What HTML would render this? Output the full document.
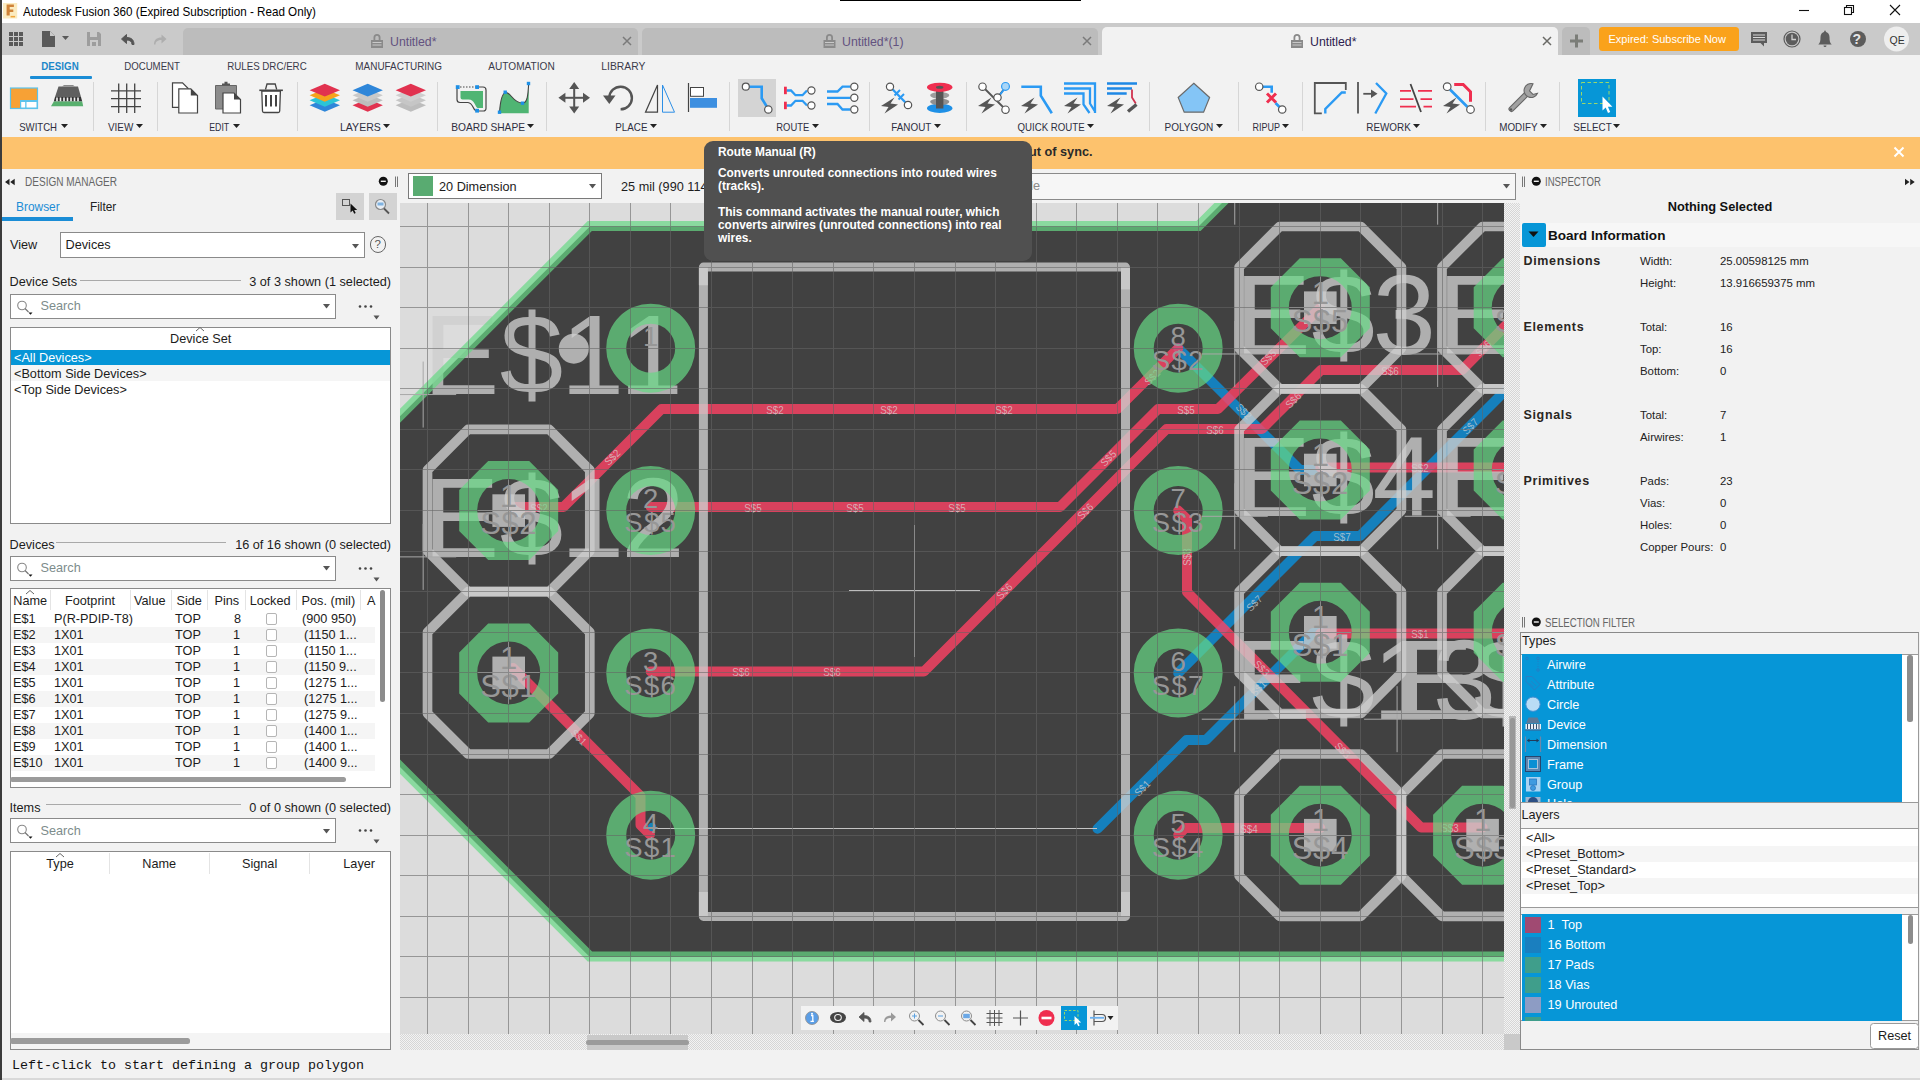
<!DOCTYPE html>
<html lang="en"><head><meta charset="utf-8"><title>Autodesk Fusion 360</title>
<style>
*{box-sizing:border-box}
html,body{margin:0;padding:0}
body{width:1920px;height:1080px;overflow:hidden;position:relative;background:#f2f2f2;font-family:"Liberation Sans",sans-serif;font-size:13px;color:#1a1a1a}
.abs{position:absolute}
.t{position:absolute;white-space:nowrap;line-height:1}
#titlebar{left:0;top:0;width:1920px;height:23px;background:#fff}
#tabbar{left:0;top:23px;width:1920px;height:32px;background:#cacaca}
#toolbar{left:0;top:55px;width:1920px;height:82px;background:#f2f2f2}
#notice{left:0;top:137px;width:1920px;height:32px;background:#fdc26d}
#leftedge{left:0;top:0;width:2px;height:1080px;background:#3c3c3c}
.tab{position:absolute;top:28px;height:27px;background:#bcbcbc;border-radius:5px 5px 0 0}
.tab.act{background:#f2f2f2}
.tabt{position:absolute;top:7px;font-size:12.3px;color:#5a4a78;white-space:nowrap;line-height:1}
.rt{position:absolute;top:61px;font-size:11.5px;color:#3a3a4a;white-space:nowrap;line-height:1;letter-spacing:.1px}
.gl{position:absolute;top:121px;font-size:11.5px;color:#33334a;white-space:nowrap;line-height:1}
.sep{position:absolute;top:82px;width:1px;height:49px;background:#d6d6d6}
.tah{font-family:"Liberation Sans",sans-serif;font-size:12.7px;color:#1c1c1c}
.inp{position:absolute;background:#fff;border:1px solid #8a8a8a}
.box{position:absolute;background:#fff;border:1px solid #8a8a8a}
.hdr{position:absolute;font-size:12px;color:#666;white-space:nowrap;line-height:1}
.row{position:absolute;left:0;white-space:nowrap;line-height:1}
.alt{position:absolute;background:#f5f5f5}
.sel{background:#0696d7;color:#fff}
.lbl{position:absolute;font-weight:bold;font-size:12.5px;color:#2a2622;white-space:nowrap;line-height:1;letter-spacing:.65px}
.k{position:absolute;font-size:11.4px;color:#222;white-space:nowrap;line-height:1}
</style></head><body>
<div id="titlebar" class="abs"></div>
<div class="abs" style="left:840px;top:0;width:241px;height:1px;background:#000"></div>
<div id="tabbar" class="abs"></div>
<div id="toolbar" class="abs"></div>
<div id="notice" class="abs"></div>
<!-- title -->
<svg class="abs" style="left:3px;top:3px" width="15" height="16" viewBox="0 0 15 16"><rect x="0" y="0" width="14.2" height="15.5" fill="#fbebc0"/><path d="M3.600 1.400h7.300v2.700H6.700v2.300h3.600v2.500H6.700v3.500H3.600z" fill="#cf8238"/><rect x="7.600" y="12.900" width="4.500" height="1.500" fill="#f0a63c"/></svg>
<div class="t" style="left:23px;top:6px;font-size:12.6px;color:#000;transform:scaleX(.926);transform-origin:0 0">Autodesk Fusion 360 (Expired Subscription - Read Only)</div>
<svg class="abs" style="left:1790px;top:0" width="130" height="23" viewBox="1790 0 130 23" fill="none" stroke="#111" stroke-width="1.1"><path d="M1799 10.5h10"/><rect x="1844.5" y="7.5" width="7" height="7"/><path d="M1846.500 7.500v-2h7v7h-2"/><path d="M1890 5l10 10M1900 5l-10 10"/></svg>
<!-- quick access -->
<svg class="abs" style="left:0;top:23px" width="200" height="32" viewBox="0 23 200 32">
<g fill="#5a5a5a"><rect x="9" y="32" width="4" height="4"/><rect x="14" y="32" width="4" height="4"/><rect x="19" y="32" width="4" height="4"/><rect x="9" y="37" width="4" height="4"/><rect x="14" y="37" width="4" height="4"/><rect x="19" y="37" width="4" height="4"/><rect x="9" y="42" width="4" height="4"/><rect x="14" y="42" width="4" height="4"/><rect x="19" y="42" width="4" height="4"/>
<path d="M42 31h8l5 5v11H42z"/><path d="M62 36h7l-3.500 4z"/></g>
<path d="M50 31v5h5z" fill="#cacaca"/>
<g fill="#9d9d9d"><path d="M87 32h12l2 2v12H87z"/></g><rect x="90" y="32" width="7" height="5" fill="#cacaca"/><rect x="90" y="40" width="8" height="6" fill="#cacaca"/><rect x="92" y="42" width="4" height="4" fill="#9d9d9d"/>
<path d="M121.500 39l5-4.500v3c5 0 7.500 2.500 7.500 7h-2c0-3-2-4.500-5.500-4.500v3.500z" fill="#555" stroke="#555" stroke-width="1" stroke-linejoin="round"/>
<path d="M166.500 39l-5-4.500v3c-5 0-7.500 2.500-7.500 7h1.500c0-3 2.500-4.500 6-4.500v3.500z" fill="#aeaeae"/>
</svg>
<!-- tabs -->
<div class="tab" style="left:183px;width:455px"></div>
<div class="tab" style="left:642px;width:456px"></div>
<div class="tab act" style="left:1101.500px;width:456.500px;top:27px;height:28px"></div>
<div class="tab" style="left:1562px;width:28px;border-radius:5px 5px 0 0;top:27px;height:28px"></div>
<div class="tabt" style="left:390px;top:35.5px;color:#63527f">Untitled*</div>
<div class="tabt" style="left:842px;top:35.5px;color:#63527f">Untitled*(1)</div>
<div class="tabt" style="left:1310px;top:35.5px;color:#2d1d4f">Untitled*</div>
<svg class="abs" style="left:0;top:23px" width="1920" height="32" viewBox="0 23 1920 32">
<g id="lock" fill="#8a8a8a"><path d="M371 40h12v8h-12zM373.500 40v-2.500a3.500 3.500 0 0 1 7 0V40h-1.800v-2.500a1.700 1.700 0 0 0 -3.400 0V40z"/><path d="M372.500 42.500h9M372.500 45h9" stroke="#c9c9c9" stroke-width="1"/></g>
<use href="#lock" x="452.500"/><use href="#lock" x="920"/>
<g stroke="#7a7a7a" stroke-width="1.500" fill="none"><path d="M623 37l8 8M631 37l-8 8"/><path d="M1083 37l8 8M1091 37l-8 8"/></g>
<path d="M1543 37l8 8M1551 37l-8 8" stroke="#6a6a66" stroke-width="1.500" fill="none"/>
<path d="M1570 41h13M1576.500 34.500v13" stroke="#7b7d78" stroke-width="3"/>
<rect x="1599" y="27" width="140" height="24" rx="3.500" fill="#faa21b"/>
<g fill="#5c5c5c"><path d="M1751 32h16v11h-3v3.500l-3.500-3.500h-9.500z"/><circle cx="1792" cy="39" r="8" fill="none" stroke="#5c5c5c" stroke-width="1.200"/><circle cx="1792" cy="39" r="6.300"/><path d="M1818.300 44.500c1.700-1.500 2.200-3.500 2.200-7.500a4.500 5.200 0 0 1 9 0c0 4 0.500 6 2.200 7.500zM1823.500 45.500h3a1.500 1.500 0 0 1 -3 0z"/><rect x="1824.200" y="30.700" width="1.600" height="2"/><circle cx="1858" cy="39" r="8"/></g>
<path d="M1753 35h12M1753 37.500h12M1753 40h12" stroke="#d8d8d8" stroke-width="1"/>
<path d="M1792 34.500v5h4" stroke="#d0d0d0" stroke-width="1.300" fill="none"/>
<circle cx="1896.500" cy="39" r="12.500" fill="#eeeeee"/>
</svg>
<div class="t" style="left:1608.500px;top:33.500px;font-size:11px;color:#fff">Expired: Subscribe Now</div>
<div class="t" style="left:1852.500px;top:32px;font-size:14px;font-weight:bold;color:#e6e6e6">?</div>
<div class="t" style="left:1889.500px;top:34.500px;font-size:10.5px;color:#333">QE</div>
<!-- ribbon tabs -->
<svg class="abs" style="left:0;top:55px" width="1920" height="82" viewBox="0 55 1920 82" font-family="Liberation Sans,sans-serif" font-size="11.2">
<text x="41.3" y="70.2" textLength="37.4" lengthAdjust="spacingAndGlyphs" fill="#1c87c9" font-weight="bold">DESIGN</text>
<text x="124.2" y="70.2" textLength="55.8" lengthAdjust="spacingAndGlyphs" fill="#3a3a4a">DOCUMENT</text>
<text x="227.2" y="70.2" textLength="79.5" lengthAdjust="spacingAndGlyphs" fill="#3a3a4a">RULES DRC/ERC</text>
<text x="355.3" y="70.2" textLength="86.7" lengthAdjust="spacingAndGlyphs" fill="#3a3a4a">MANUFACTURING</text>
<text x="488.3" y="70.2" textLength="66.4" lengthAdjust="spacingAndGlyphs" fill="#3a3a4a">AUTOMATION</text>
<text x="601.3" y="70.2" textLength="44.0" lengthAdjust="spacingAndGlyphs" fill="#3a3a4a">LIBRARY</text>
<text x="19.2" y="131" textLength="37.8" lengthAdjust="spacingAndGlyphs" fill="#2e2e40">SWITCH</text>
<text x="108" y="131" textLength="25.3" lengthAdjust="spacingAndGlyphs" fill="#2e2e40">VIEW</text>
<text x="209.2" y="131" textLength="20.0" lengthAdjust="spacingAndGlyphs" fill="#2e2e40">EDIT</text>
<text x="340" y="131" textLength="40.8" lengthAdjust="spacingAndGlyphs" fill="#2e2e40">LAYERS</text>
<text x="451.3" y="131" textLength="73.7" lengthAdjust="spacingAndGlyphs" fill="#2e2e40">BOARD SHAPE</text>
<text x="615.3" y="131" textLength="32.2" lengthAdjust="spacingAndGlyphs" fill="#2e2e40">PLACE</text>
<text x="776.3" y="131" textLength="32.9" lengthAdjust="spacingAndGlyphs" fill="#2e2e40">ROUTE</text>
<text x="891.3" y="131" textLength="40.0" lengthAdjust="spacingAndGlyphs" fill="#2e2e40">FANOUT</text>
<text x="1017.5" y="131" textLength="67.2" lengthAdjust="spacingAndGlyphs" fill="#2e2e40">QUICK ROUTE</text>
<text x="1164.5" y="131" textLength="48.8" lengthAdjust="spacingAndGlyphs" fill="#2e2e40">POLYGON</text>
<text x="1252.5" y="131" textLength="27.5" lengthAdjust="spacingAndGlyphs" fill="#2e2e40">RIPUP</text>
<text x="1366.3" y="131" textLength="44.5" lengthAdjust="spacingAndGlyphs" fill="#2e2e40">REWORK</text>
<text x="1499.2" y="131" textLength="38.3" lengthAdjust="spacingAndGlyphs" fill="#2e2e40">MODIFY</text>
<text x="1573.3" y="131" textLength="38.4" lengthAdjust="spacingAndGlyphs" fill="#2e2e40">SELECT</text>
</svg>
<div class="abs" style="left:30px;top:76px;width:62px;height:3px;background:#1b8dd6;border-radius:1px"></div>
<svg class="abs" style="left:0;top:118px" width="1920" height="16" viewBox="0 118 1920 16" fill="#222">
<path id="dd" d="M0 0h7l-3.500 4z" transform="translate(61 124)"/>
<use href="#dd" x="75"/><use href="#dd" x="172"/><use href="#dd" x="322"/><use href="#dd" x="466"/><use href="#dd" x="589"/><use href="#dd" x="751"/><use href="#dd" x="873"/><use href="#dd" x="1026"/><use href="#dd" x="1155"/><use href="#dd" x="1221"/><use href="#dd" x="1352"/><use href="#dd" x="1479"/><use href="#dd" x="1552"/>
</svg>
<div class="sep" style="left:93px"></div><div class="sep" style="left:157px"></div><div class="sep" style="left:297px"></div><div class="sep" style="left:437px"></div><div class="sep" style="left:546px"></div><div class="sep" style="left:729px"></div><div class="sep" style="left:869px"></div><div class="sep" style="left:966px"></div><div class="sep" style="left:1149px"></div><div class="sep" style="left:1238px"></div><div class="sep" style="left:1302px"></div><div class="sep" style="left:1485px"></div><div class="sep" style="left:1559px"></div>
<!-- notice -->
<div class="t" style="right:827.5px;top:145.5px;font-size:12.7px;font-weight:bold;color:#2a2a2a">Board and schematic are out of sync.</div>
<svg class="abs" style="left:1892px;top:145px" width="14" height="14" viewBox="0 0 14 14"><path d="M2.500 2.500l9 9M11.500 2.500l-9 9" stroke="#fff" stroke-width="2" fill="none"/></svg>
<svg class="abs" style="left:0;top:76px" width="1920" height="44" viewBox="0 76 1920 44" fill="none">
<defs>
<path id="bolt" d="M13.500 0L0 8.500l7.500 1L3.500 16 17 7l-7.500-1z" fill="#555"/>
<path id="dia" d="M0 6.400L15.200 0l15.200 6.400L15.200 12.800z"/>
</defs>
<!-- switch -->
<rect x="10.500" y="88" width="27" height="20.500" fill="#f7a135" stroke="#5cc3ec" stroke-width="1.200"/>
<rect x="20" y="100" width="17.500" height="8.500" fill="#5cc3ec"/><rect x="21.200" y="102" width="4" height="5.500" fill="#fff"/><rect x="26.500" y="102" width="10" height="5.500" fill="#fff"/>
<path d="M58.500 86.500h19.500l3 10.500H55z" fill="#5f5f5f"/><path d="M62 86.500l2-1.500h9l2 1.500" fill="#8a8a8a"/>
<path d="M55 97h26l1.200 4.500H53.800z" fill="#333"/><path d="M57 97.500v4M60.500 97.500v4M64 97.500v4M67.500 97.500v4M71 97.500v4M74.500 97.500v4M78 97.500v4" stroke="#f4f4f4" stroke-width="1.600"/>
<path d="M53.800 101.500h28.400l1 4.700H51z" fill="#58b06e"/>
<!-- view grid -->
<path d="M118.700 83.500v29.500M126.700 83.500v29.500M134.700 83.500v29.500M111 90.800h30M111 98.700h30M111 106.700h30" stroke="#444" stroke-width="1.300"/>
<!-- copy -->
<path d="M172.500 82.800h10l5.500 5.500v19h-15.500z" fill="#fff" stroke="#444" stroke-width="1.200"/>
<path d="M178.800 88.800h12l6.700 6.700v17.500h-18.700z" fill="#fff" stroke="#444" stroke-width="1.200"/><path d="M190.800 88.800v6.700h6.700z" fill="#444"/>
<!-- paste -->
<path d="M215.500 85.500h21v23.500h-21z" fill="#8c8c8c" stroke="#666" stroke-width="1"/><path d="M222 85.500v-2h2.500v-1.800h3v1.800h2.500v2z" fill="#555"/>
<path d="M223 93h11l6.500 6.500V113H223z" fill="#fff" stroke="#444" stroke-width="1.200"/><path d="M234 93v6.500h6.500z" fill="#444"/>
<!-- trash -->
<path d="M261.800 91h18.600l-0.700 20a1.500 1.500 0 0 1 -1.500 1.500h-14.200a1.500 1.500 0 0 1 -1.500-1.500z" fill="#fff" stroke="#444" stroke-width="1.300"/>
<path d="M259.300 90.300h23.600" stroke="#444" stroke-width="1.600"/><path d="M265.500 89.500l1.500-5.500h8.200l1.500 5.500" stroke="#444" stroke-width="1.300"/>
<path d="M266 95v11.500M271 95v11.500M276 95v11.500" stroke="#444" stroke-width="2"/>
<!-- layers -->
<g transform="translate(309.600 0)"><use href="#dia" y="98.900" fill="#2e86d9"/><use href="#dia" y="93.900" fill="#2bc4d6"/><use href="#dia" y="88.900" fill="#f6a21c"/><use href="#dia" y="83.800" fill="#e1324f"/></g>
<g transform="translate(352.500 0)"><use href="#dia" y="98.900" fill="#e1324f"/><use href="#dia" y="93.900" fill="#bdbdbd"/><use href="#dia" y="88.900" fill="#c9c9c9"/><use href="#dia" y="83.800" fill="#2e86d9"/></g>
<g transform="translate(395.600 0)"><use href="#dia" y="98.900" fill="#bdbdbd"/><use href="#dia" y="93.900" fill="#c6c6c6"/><use href="#dia" y="88.900" fill="#cfcfcf"/><use href="#dia" y="83.800" fill="#e1324f"/></g>
<!-- board shape -->
<path d="M457.500 87h25.500a3 3 0 0 1 3 3v18.500a2.500 2.500 0 0 1 -2.500 2.500h-7c-3.500 0-3-8-8.500-8.500h-8a3 3 0 0 1 -3-3V87z" fill="none" stroke="#444" stroke-width="1.200"/>
<path d="M460.500 91h22.500v17h-5.500c-2.500-1-2.500-8.500-9-8.500h-6a2 2 0 0 1 -2-2z" fill="#4fb573"/>
<path d="M459 87h17" stroke="#f2f2f2" stroke-width="2"/><path d="M460 87h16" stroke="#444" stroke-width="1.200" stroke-dasharray="1.500 1.500"/>
<g fill="#1e90e6"><rect x="455.800" y="85.200" width="3.800" height="3.800"/><rect x="475.200" y="85.200" width="3.800" height="3.800"/><rect x="475.200" y="108.800" width="3.800" height="3.800"/></g>
<path d="M499.500 112.500c1-14 3.500-20 6.500-20 5 0 7 10.500 16.500 10.500 5 0 5.500-8 6.200-19.500V113.300H499.500z" fill="#4fb573"/>
<path d="M499.500 112.500c1-14 3.500-20 6.500-20 5 0 7 10.500 16.500 10.500 5 0 5.500-8 6.200-19.500" stroke="#444" stroke-width="1.100"/>
<g fill="#1e90e6"><rect x="497.800" y="110.500" width="3.400" height="3.400"/><rect x="503.500" y="90.500" width="3.400" height="3.400"/><rect x="520.800" y="101.500" width="3.400" height="3.400"/><rect x="526.800" y="81.800" width="3.400" height="3.400"/></g>
<!-- move -->
<g fill="#555"><path d="M574.200 82l5 7h-10zM574.200 113.600l5-7h-10zM558.400 97.800l7-5v10zM590 97.800l-7-5v10z"/><rect x="573.200" y="88" width="2" height="19.500"/><rect x="564" y="96.800" width="20" height="2"/></g>
<!-- rotate -->
<path d="M609.300 97.500a11.300 11.300 0 1 1 11.300 11.800" stroke="#555" stroke-width="2.400"/><path d="M603 95.500h12.500l-6.200 8.500z" fill="#555"/>
<!-- mirror -->
<path d="M657.500 85v27.200h-12z" stroke="#444" stroke-width="1.200"/><path d="M662.500 85v27.200h12z" stroke="#2d8fe6" stroke-width="1"/>
<!-- align -->
<path d="M688.500 83v29" stroke="#444" stroke-width="1.200"/><rect x="690.500" y="87.500" width="13" height="8.800" fill="#fff" stroke="#444" stroke-width="1"/><rect x="690" y="98" width="27" height="9.800" fill="#3d8fe0"/>
<!-- route manual -->
<rect x="738" y="79" width="38" height="38" fill="#d4d4d4"/>
<path d="M749 86.700h12.700v11.600l5.500 9" stroke="#2b9af3" stroke-width="2.600"/><circle cx="745.800" cy="86.700" r="3.500" fill="#fff" stroke="#555" stroke-width="1.200"/><circle cx="768.300" cy="109.500" r="3.700" fill="#fff" stroke="#555" stroke-width="1.200"/>
<!-- route diff -->
<path d="M786.500 90.500h4.500l4.500 4.700h7l4.500-4.700M786.500 105.500h4.500l4.500-4.700h7l4.500 4.700" stroke="#2b9af3" stroke-width="2.300"/><rect x="784" y="86.700" width="2.800" height="7.500" fill="#ef2e4f"/><rect x="784" y="101.700" width="2.800" height="7.500" fill="#ef2e4f"/>
<circle cx="811.400" cy="90.500" r="3.600" fill="#fff" stroke="#555" stroke-width="1.200"/><circle cx="811.400" cy="105.500" r="3.600" fill="#fff" stroke="#555" stroke-width="1.200"/>
<!-- route multi -->
<path d="M827 91.500h10.500l5-4.800h8M827 97.800h23.500M827 104h10.500l5 5.500h8" stroke="#2b9af3" stroke-width="2.300"/>
<circle cx="854.300" cy="86.700" r="3.600" fill="#fff" stroke="#555" stroke-width="1.200"/><circle cx="854.300" cy="97.800" r="3.600" fill="#fff" stroke="#555" stroke-width="1.200"/><circle cx="854.300" cy="109.500" r="3.600" fill="#fff" stroke="#555" stroke-width="1.200"/>
<!-- fanout 1 -->
<path d="M892.500 89.200l13 13.300" stroke="#2b9af3" stroke-width="2.300"/><path d="M894.500 95.500l5.500-5.500M898.500 99.500l5.500-5.500" stroke="#2b9af3" stroke-width="2"/>
<circle cx="890" cy="86.700" r="3.600" fill="#fff" stroke="#555" stroke-width="1.200"/><circle cx="908" cy="105" r="3.700" fill="#fff" stroke="#555" stroke-width="1.200"/>
<use href="#bolt" x="881" y="97.500"/>
<!-- via -->
<ellipse cx="939.700" cy="108.300" rx="12.700" ry="4.600" fill="#1e90e6"/><ellipse cx="939.700" cy="101.800" rx="9.600" ry="3.300" fill="#8f8f8f"/><ellipse cx="939.700" cy="95.300" rx="9.600" ry="3.300" fill="#9d9d9d"/>
<rect x="936" y="88" width="7.400" height="20.500" fill="#555"/><ellipse cx="939.700" cy="87.300" rx="12.700" ry="4.600" fill="#ef2e4f"/><ellipse cx="939.700" cy="87.300" rx="3.700" ry="1.500" fill="#555"/>
<!-- quick route airwire -->
<path d="M985 89l18 18M999.500 95l4.500-6" stroke="#555" stroke-width="1.800"/><path d="M999.800 95l4.200-5.500" stroke="#2b9af3" stroke-width="2"/>
<circle cx="982.500" cy="86.700" r="3.700" fill="#fff" stroke="#555" stroke-width="1.200"/><circle cx="1005.500" cy="86.400" r="3.900" fill="#a9d6f7" stroke="#2b9af3" stroke-width="1.200"/><circle cx="997.500" cy="97.500" r="3.700" fill="#fff" stroke="#555" stroke-width="1.200"/><circle cx="1005.500" cy="109.700" r="3.700" fill="#fff" stroke="#555" stroke-width="1.200"/>
<use href="#bolt" x="978" y="97.500"/>
<path d="M1021.300 86.700h19.500v9l11 17.600" stroke="#2b9af3" stroke-width="2.600"/><use href="#bolt" x="1021" y="97.500"/>
<path d="M1064 83.500h31v29.500M1064 88.500h26v15l5 8M1064 93.500h19.500v11l6 8.500" stroke="#2b9af3" stroke-width="2.300"/><use href="#bolt" x="1064" y="97.500"/>
<path d="M1107 83.500h30M1107 88.500h25M1107 93.500h19.700" stroke="#1e88e5" stroke-width="2.600"/><path d="M1132 89.500v8l3.800 6" stroke="#d0334f" stroke-width="1.800"/><path d="M1136.500 104.500l-8.500 7" stroke="#555" stroke-width="3.400"/><use href="#bolt" x="1107" y="97.500"/>
<!-- polygon -->
<path d="M1193.800 83.200l15.800 14.300-6 14.700h-19.400l-6-14.700z" fill="#84c5f6" stroke="#6b6b6b" stroke-width="1.200"/>
<!-- ripup -->
<path d="M1262.500 86.700h9.200v6M1275.500 103l4.500 4.500" stroke="#2b9af3" stroke-width="2.600"/><path d="M1267 93.500l9 9M1276 93.500l-9 9" stroke="#ef2e4f" stroke-width="3"/>
<circle cx="1259.200" cy="86.700" r="3.700" fill="#fff" stroke="#555" stroke-width="1.200"/><circle cx="1282.200" cy="109.500" r="3.700" fill="#fff" stroke="#555" stroke-width="1.200"/>
<!-- rework -->
<path d="M1345.800 90v-7h-31v30.300h7" stroke="#555" stroke-width="1.800"/><path d="M1325.300 113.500v-4.500l16.500-16.500h4" stroke="#2b9af3" stroke-width="2.400"/>
<path d="M1358 82v31.500" stroke="#555" stroke-width="1.800"/><path d="M1363.300 93.800h9" stroke="#555" stroke-width="1.800"/><path d="M1371 89.500l6.500 4.300-6.500 4.300z" fill="#555"/><path d="M1376 83l10.300 10.500-11 20" stroke="#2b9af3" stroke-width="2.300"/>
<path d="M1400 90.800h11M1418 90.800h14M1400 99.200h13.500M1420.500 99.200h11.500M1400 106.700h16M1423.500 106.700h8.500" stroke="#ef2e4f" stroke-width="1.800"/><path d="M1410.500 84l10.500 28" stroke="#444" stroke-width="1.800"/>
<path d="M1454.200 84.400h9l7.300 7.400v10" stroke="#ef2e4f" stroke-width="3"/><path d="M1450 89.500l17.500 17.500" stroke="#2b9af3" stroke-width="2.600"/>
<circle cx="1447.200" cy="86.700" r="3.800" fill="#fff" stroke="#555" stroke-width="1.200"/><circle cx="1470.500" cy="109.500" r="3.800" fill="#fff" stroke="#555" stroke-width="1.200"/><use href="#bolt" x="1443" y="97.500"/>
<!-- wrench -->
<path d="M1511.500 109l15.500-15.500" stroke="#666" stroke-width="6" stroke-linecap="round"/><path d="M1511.500 109l15.500-15.500" stroke="#a2a2a2" stroke-width="3.800" stroke-linecap="round"/>
<path d="M1533 83.800a7 7 0 1 0 4.500 9.500l-4.500 1.200-3.500-3.500z" fill="#a2a2a2" stroke="#666" stroke-width="1.100"/><circle cx="1511" cy="109.500" r="1.200" fill="#555"/>
<!-- select -->
<rect x="1578" y="79" width="38" height="38" fill="#0696d7"/><rect x="1581.500" y="82.500" width="27.500" height="21" stroke="#9bd86a" stroke-width="1" stroke-dasharray="3.500 2.500"/>
<path d="M1602.500 96.500v14l3.200-3 2.300 5.500 2.200-1-2.300-5.300h4.500z" fill="#fff"/>
</svg>
<!-- left panel -->
<svg class="abs" style="left:0;top:170px" width="400" height="24" viewBox="0 170 400 24"><path d="M5 182l4.500-3.200v6.400zM10.200 182l4.500-3.200v6.400z" fill="#222"/><circle cx="383.300" cy="181.300" r="4.500" fill="#111"/><rect x="380.800" y="180.600" width="5" height="1.400" fill="#f2f2f2"/><path d="M395.500 176.500v10.500M397.500 176.500v10.500" stroke="#777" stroke-width="1"/></svg>
<div class="hdr" style="left:25px;top:175.500px;transform:scaleX(.836);transform-origin:0 0">DESIGN MANAGER</div>
<div class="t" style="left:15.500px;top:199.500px;font-size:13px;color:#1b8dd6;transform:scaleX(.917);transform-origin:0 0">Browser</div>
<div class="abs" style="left:2px;top:217px;width:71px;height:3.500px;background:#1b8dd6"></div>
<div class="t" style="left:89.500px;top:199.500px;font-size:13px;color:#222;transform:scaleX(.909);transform-origin:0 0">Filter</div>
<div class="abs" style="left:336px;top:193px;width:27.500px;height:26.500px;background:#d3d3d3"></div><div class="abs" style="left:369px;top:193px;width:27.500px;height:26.500px;background:#d3d3d3"></div>
<svg class="abs" style="left:336px;top:193px" width="61" height="27" viewBox="336 193 61 27" fill="none"><rect x="342.500" y="199.500" width="7" height="6" stroke="#555" stroke-width="1"/><path d="M350.500 203.500v9l2.200-2 1.500 3.300 1.500-0.700-1.500-3.200h3z" fill="#111"/><circle cx="380.500" cy="204.500" r="5" stroke="#888" stroke-width="1.200" fill="#e9eef4"/><path d="M384 208.500l5 5" stroke="#555" stroke-width="1.800"/><rect x="377.500" y="202.500" width="6" height="3" fill="#7fb2e0"/></svg>
<div class="t tah" style="left:10px;top:239px">View</div>
<div class="inp" style="left:60px;top:232px;width:305px;height:26px"></div><div class="t tah" style="left:65.500px;top:239px">Devices</div>
<svg class="abs" style="left:352.0px;top:243.5px" width="7" height="5" viewBox="0 0 7 5"><path d="M0 0h7l-3.500 4.500z" fill="#555"/></svg>
<div class="abs" style="left:369.500px;top:236px;width:16.500px;height:16.500px;border:1px solid #666;border-radius:50%"></div><div class="t" style="left:374.500px;top:239px;font-size:11.500px;color:#555">?</div>
<div class="t tah" style="left:9.500px;top:276px">Device Sets</div>
<div class="abs" style="left:79.5px;top:279.5px;width:161.0px;height:1px;background:#a9a9a9"></div>
<div class="t tah" style="right:1529px;top:276px">3 of 3 shown (1 selected)</div>
<div class="inp" style="left:9.500px;top:293.5px;width:326px;height:25px"></div>
<svg class="abs" style="left:15px;top:298.5px" width="22" height="18" viewBox="0 0 22 18" fill="none"><circle cx="7" cy="6.500" r="4.300" stroke="#888" stroke-width="1.100"/><path d="M10 9.500l3.500 3.500" stroke="#777" stroke-width="1.300"/><path d="M13.500 13.500h4l-2 2.300z" fill="#111"/></svg>
<div class="t tah" style="left:40.500px;top:300px;color:#7d8c8c">Search</div>
<svg class="abs" style="left:323.3px;top:304.0px" width="7" height="5" viewBox="0 0 7 5"><path d="M0 0h7l-3.500 4.500z" fill="#555"/></svg>
<svg class="abs" style="left:357px;top:302.5px" width="24" height="18" viewBox="0 0 24 18"><circle cx="3" cy="3.500" r="1.300" fill="#444"/><circle cx="8.500" cy="3.500" r="1.300" fill="#444"/><circle cx="14" cy="3.500" r="1.300" fill="#444"/><path d="M16.500 12.500h6l-3 4z" fill="#555"/></svg>
<div class="t tah" style="left:9.500px;top:538.5px">Devices</div>
<div class="abs" style="left:56px;top:541.5px;width:170px;height:1px;background:#a9a9a9"></div>
<div class="t tah" style="right:1529px;top:538.5px">16 of 16 shown (0 selected)</div>
<div class="inp" style="left:9.500px;top:555.5px;width:326px;height:25px"></div>
<svg class="abs" style="left:15px;top:560.5px" width="22" height="18" viewBox="0 0 22 18" fill="none"><circle cx="7" cy="6.500" r="4.300" stroke="#888" stroke-width="1.100"/><path d="M10 9.500l3.500 3.500" stroke="#777" stroke-width="1.300"/><path d="M13.500 13.500h4l-2 2.300z" fill="#111"/></svg>
<div class="t tah" style="left:40.500px;top:562px;color:#7d8c8c">Search</div>
<svg class="abs" style="left:323.3px;top:566.0px" width="7" height="5" viewBox="0 0 7 5"><path d="M0 0h7l-3.500 4.500z" fill="#555"/></svg>
<svg class="abs" style="left:357px;top:564.5px" width="24" height="18" viewBox="0 0 24 18"><circle cx="3" cy="3.500" r="1.300" fill="#444"/><circle cx="8.500" cy="3.500" r="1.300" fill="#444"/><circle cx="14" cy="3.500" r="1.300" fill="#444"/><path d="M16.500 12.500h6l-3 4z" fill="#555"/></svg>
<div class="t tah" style="left:9.500px;top:801.5px">Items</div>
<div class="abs" style="left:46px;top:804px;width:195px;height:1px;background:#a9a9a9"></div>
<div class="t tah" style="right:1529px;top:801.5px">0 of 0 shown (0 selected)</div>
<div class="inp" style="left:9.500px;top:818px;width:326px;height:25px"></div>
<svg class="abs" style="left:15px;top:823px" width="22" height="18" viewBox="0 0 22 18" fill="none"><circle cx="7" cy="6.500" r="4.300" stroke="#888" stroke-width="1.100"/><path d="M10 9.500l3.500 3.500" stroke="#777" stroke-width="1.300"/><path d="M13.500 13.500h4l-2 2.300z" fill="#111"/></svg>
<div class="t tah" style="left:40.500px;top:824.5px;color:#7d8c8c">Search</div>
<svg class="abs" style="left:323.3px;top:828.5px" width="7" height="5" viewBox="0 0 7 5"><path d="M0 0h7l-3.500 4.500z" fill="#555"/></svg>
<svg class="abs" style="left:357px;top:827px" width="24" height="18" viewBox="0 0 24 18"><circle cx="3" cy="3.500" r="1.300" fill="#444"/><circle cx="8.500" cy="3.500" r="1.300" fill="#444"/><circle cx="14" cy="3.500" r="1.300" fill="#444"/><path d="M16.500 12.500h6l-3 4z" fill="#555"/></svg>
<div class="box" style="left:9.500px;top:326.500px;width:381.500px;height:197.500px"></div>
<svg class="abs" style="left:195px;top:326px" width="10" height="6" viewBox="0 0 10 6"><path d="M1 5l4-3.500 4 3.500" stroke="#666" fill="none" stroke-width="1"/></svg>
<div class="t tah" style="left:170px;top:333px">Device Set</div>
<div class="abs sel" style="left:10.500px;top:349.500px;width:379.500px;height:15.500px"></div><div class="t tah" style="left:14px;top:351.6px;color:#fff">&lt;All Devices&gt;</div>
<div class="alt" style="left:10.500px;top:365px;width:379.500px;height:16px"></div><div class="t tah" style="left:14px;top:367.6px">&lt;Bottom Side Devices&gt;</div>
<div class="t tah" style="left:14px;top:383.6px">&lt;Top Side Devices&gt;</div>
<div class="box" style="left:9.500px;top:588px;width:381.500px;height:199.500px"></div>
<svg class="abs" style="left:25px;top:589px" width="10" height="6" viewBox="0 0 10 6"><path d="M1 5l4-3.500 4 3.500" stroke="#666" fill="none" stroke-width="1"/></svg>
<div class="t tah" style="left:-19.8px;width:100px;text-align:center;top:595.2px">Name</div>
<div class="t tah" style="left:40px;width:100px;text-align:center;top:595.2px">Footprint</div>
<div class="t tah" style="left:99.80000000000001px;width:100px;text-align:center;top:595.2px">Value</div>
<div class="t tah" style="left:139.2px;width:100px;text-align:center;top:595.2px">Side</div>
<div class="t tah" style="left:176.8px;width:100px;text-align:center;top:595.2px">Pins</div>
<div class="t tah" style="left:220.10000000000002px;width:100px;text-align:center;top:595.2px">Locked</div>
<div class="t tah" style="left:278.4px;width:100px;text-align:center;top:595.2px">Pos. (mil)</div>
<div class="t tah" style="left:367px;top:595.2px">A</div>
<div class="abs" style="left:50px;top:590px;width:1px;height:20px;background:#e4e4e4"></div>
<div class="abs" style="left:129.5px;top:590px;width:1px;height:20px;background:#e4e4e4"></div>
<div class="abs" style="left:170.5px;top:590px;width:1px;height:20px;background:#e4e4e4"></div>
<div class="abs" style="left:207px;top:590px;width:1px;height:20px;background:#e4e4e4"></div>
<div class="abs" style="left:244.5px;top:590px;width:1px;height:20px;background:#e4e4e4"></div>
<div class="abs" style="left:295.5px;top:590px;width:1px;height:20px;background:#e4e4e4"></div>
<div class="abs" style="left:360px;top:590px;width:1px;height:20px;background:#e4e4e4"></div>
<div class="t tah" style="left:13px;top:612.75px">E$1</div><div class="t tah" style="left:54px;top:612.75px">P(R-PDIP-T8)</div><div class="t tah" style="left:175px;top:612.75px">TOP</div><div class="t tah" style="left:234px;top:612.75px">8</div><div class="t tah" style="left:302px;top:612.75px">(900 950)</div>
<div class="abs" style="left:265.500px;top:613.25px;width:11.500px;height:11.500px;background:#fff;border:1px solid #b5b5b5;border-radius:2px"></div>
<div class="alt" style="left:10.500px;top:627.25px;width:364px;height:16px"></div>
<div class="t tah" style="left:13px;top:628.75px">E$2</div><div class="t tah" style="left:54px;top:628.75px">1X01</div><div class="t tah" style="left:175px;top:628.75px">TOP</div><div class="t tah" style="left:233px;top:628.75px">1</div><div class="t tah" style="left:304px;top:628.75px">(1150 1...</div>
<div class="abs" style="left:265.500px;top:629.25px;width:11.500px;height:11.500px;background:#fff;border:1px solid #b5b5b5;border-radius:2px"></div>
<div class="t tah" style="left:13px;top:644.75px">E$3</div><div class="t tah" style="left:54px;top:644.75px">1X01</div><div class="t tah" style="left:175px;top:644.75px">TOP</div><div class="t tah" style="left:233px;top:644.75px">1</div><div class="t tah" style="left:304px;top:644.75px">(1150 1...</div>
<div class="abs" style="left:265.500px;top:645.25px;width:11.500px;height:11.500px;background:#fff;border:1px solid #b5b5b5;border-radius:2px"></div>
<div class="alt" style="left:10.500px;top:659.25px;width:364px;height:16px"></div>
<div class="t tah" style="left:13px;top:660.75px">E$4</div><div class="t tah" style="left:54px;top:660.75px">1X01</div><div class="t tah" style="left:175px;top:660.75px">TOP</div><div class="t tah" style="left:233px;top:660.75px">1</div><div class="t tah" style="left:304px;top:660.75px">(1150 9...</div>
<div class="abs" style="left:265.500px;top:661.25px;width:11.500px;height:11.500px;background:#fff;border:1px solid #b5b5b5;border-radius:2px"></div>
<div class="t tah" style="left:13px;top:676.75px">E$5</div><div class="t tah" style="left:54px;top:676.75px">1X01</div><div class="t tah" style="left:175px;top:676.75px">TOP</div><div class="t tah" style="left:233px;top:676.75px">1</div><div class="t tah" style="left:304px;top:676.75px">(1275 1...</div>
<div class="abs" style="left:265.500px;top:677.25px;width:11.500px;height:11.500px;background:#fff;border:1px solid #b5b5b5;border-radius:2px"></div>
<div class="alt" style="left:10.500px;top:691.25px;width:364px;height:16px"></div>
<div class="t tah" style="left:13px;top:692.75px">E$6</div><div class="t tah" style="left:54px;top:692.75px">1X01</div><div class="t tah" style="left:175px;top:692.75px">TOP</div><div class="t tah" style="left:233px;top:692.75px">1</div><div class="t tah" style="left:304px;top:692.75px">(1275 1...</div>
<div class="abs" style="left:265.500px;top:693.25px;width:11.500px;height:11.500px;background:#fff;border:1px solid #b5b5b5;border-radius:2px"></div>
<div class="t tah" style="left:13px;top:708.75px">E$7</div><div class="t tah" style="left:54px;top:708.75px">1X01</div><div class="t tah" style="left:175px;top:708.75px">TOP</div><div class="t tah" style="left:233px;top:708.75px">1</div><div class="t tah" style="left:304px;top:708.75px">(1275 9...</div>
<div class="abs" style="left:265.500px;top:709.25px;width:11.500px;height:11.500px;background:#fff;border:1px solid #b5b5b5;border-radius:2px"></div>
<div class="alt" style="left:10.500px;top:723.25px;width:364px;height:16px"></div>
<div class="t tah" style="left:13px;top:724.75px">E$8</div><div class="t tah" style="left:54px;top:724.75px">1X01</div><div class="t tah" style="left:175px;top:724.75px">TOP</div><div class="t tah" style="left:233px;top:724.75px">1</div><div class="t tah" style="left:304px;top:724.75px">(1400 1...</div>
<div class="abs" style="left:265.500px;top:725.25px;width:11.500px;height:11.500px;background:#fff;border:1px solid #b5b5b5;border-radius:2px"></div>
<div class="t tah" style="left:13px;top:740.75px">E$9</div><div class="t tah" style="left:54px;top:740.75px">1X01</div><div class="t tah" style="left:175px;top:740.75px">TOP</div><div class="t tah" style="left:233px;top:740.75px">1</div><div class="t tah" style="left:304px;top:740.75px">(1400 1...</div>
<div class="abs" style="left:265.500px;top:741.25px;width:11.500px;height:11.500px;background:#fff;border:1px solid #b5b5b5;border-radius:2px"></div>
<div class="alt" style="left:10.500px;top:755.25px;width:364px;height:16px"></div>
<div class="t tah" style="left:13px;top:756.75px">E$10</div><div class="t tah" style="left:54px;top:756.75px">1X01</div><div class="t tah" style="left:175px;top:756.75px">TOP</div><div class="t tah" style="left:233px;top:756.75px">1</div><div class="t tah" style="left:304px;top:756.75px">(1400 9...</div>
<div class="abs" style="left:265.500px;top:757.25px;width:11.500px;height:11.500px;background:#fff;border:1px solid #b5b5b5;border-radius:2px"></div>
<div class="abs" style="left:379.500px;top:589.500px;width:5px;height:112.500px;background:#8c8c8c;border-radius:2.500px"></div>
<div class="abs" style="left:10px;top:776.500px;width:336px;height:5.500px;background:#9b9b9b;border-radius:2.500px"></div>
<div class="box" style="left:9.500px;top:851px;width:381.500px;height:199px"></div>
<svg class="abs" style="left:55px;top:852px" width="10" height="6" viewBox="0 0 10 6"><path d="M1 5l4-3.500 4 3.500" stroke="#666" fill="none" stroke-width="1"/></svg>
<div class="t tah" style="left:10px;width:100px;text-align:center;top:858.2px">Type</div>
<div class="t tah" style="left:109.19999999999999px;width:100px;text-align:center;top:858.2px">Name</div>
<div class="t tah" style="left:209.60000000000002px;width:100px;text-align:center;top:858.2px">Signal</div>
<div class="t tah" style="left:309.2px;width:100px;text-align:center;top:858.2px">Layer</div>
<div class="abs" style="left:109.3px;top:853px;width:1px;height:21px;background:#e4e4e4"></div>
<div class="abs" style="left:209.4px;top:853px;width:1px;height:21px;background:#e4e4e4"></div>
<div class="abs" style="left:309.3px;top:853px;width:1px;height:21px;background:#e4e4e4"></div>
<div class="abs" style="left:10.500px;top:1033px;width:379.500px;height:16px;background:#f4f4f4"></div>
<div class="abs" style="left:10px;top:1038px;width:180px;height:5.500px;background:#9b9b9b;border-radius:2.500px"></div>
<div class="t" style="left:12px;top:1058.500px;font-family:'Liberation Mono',monospace;font-size:13.330px;color:#111">Left-click to start defining a group polygon</div>
<div class="abs" style="left:0;top:1078px;width:1920px;height:2px;background:#d9d9d9"></div>
<!-- canvas top bar -->
<div class="inp" style="left:408px;top:173px;width:194px;height:26px;border-color:#7a7a7a"></div>
<div class="abs" style="left:413px;top:176px;width:20px;height:20px;background:#59ab71"></div>
<div class="t tah" style="left:439px;top:180.8px">20 Dimension</div>
<svg class="abs" style="left:589px;top:184px" width="7" height="5" viewBox="0 0 7 5"><path d="M0 0h7l-3.500 4.500z" fill="#555"/></svg>
<div class="t tah" style="left:621px;top:180.8px">25 mil (990 1145)</div>
<div class="inp" style="left:745px;top:172.500px;width:771px;height:27px;border-color:#8a8a8a;background:#f6f6f6"></div>
<div class="t tah" style="right:880px;top:180px;color:#8a8a8a">Click or press Slash to activate command line mode</div>
<svg class="abs" style="left:1503px;top:184px" width="7" height="5" viewBox="0 0 7 5"><path d="M0 0h7l-3.500 4.500z" fill="#555"/></svg>
<svg class="abs" style="left:400px;top:203px" width="1104" height="831" viewBox="400 203 1104 831">
<rect x="400" y="203" width="1104" height="831" fill="#dcdcdc"/>
<polygon points="380.0,436.3 589.8,226.5 1198.5,226.5 1258.5,166.5 1524.0,166.5 1524.0,956.9 589.8,956.9 380.0,747.1" fill="#414141"/>
<polyline points="1178.2,348.2 1300.0,470.0 1320.3,470.0" fill="none" stroke="#1580bd" stroke-width="10" stroke-linecap="round" stroke-linejoin="round" />
<polyline points="1178.2,672.9 1315.0,536.0 1360.0,536.0 1520.0,376.0" fill="none" stroke="#1580bd" stroke-width="10" stroke-linecap="round" stroke-linejoin="round" />
<polyline points="1097.5,828.7 1186.5,740.0 1206.0,740.0 1313.0,633.0 1320.3,632.3" fill="none" stroke="#1580bd" stroke-width="10" stroke-linecap="round" stroke-linejoin="round" />
<polyline points="513.0,507.0 563.5,507.0 661.5,409.0 1117.4,409.0 1178.2,348.2" fill="none" stroke="#ff4164" stroke-width="10" stroke-linecap="round" stroke-linejoin="round" opacity="0.8"/>
<polyline points="650.7,507.0 1060.0,507.0 1158.0,409.0 1218.0,409.0 1320.3,307.7" fill="none" stroke="#ff4164" stroke-width="10" stroke-linecap="round" stroke-linejoin="round" opacity="0.8"/>
<polyline points="650.7,671.5 924.0,671.5 1166.5,429.0 1262.0,429.0 1321.0,370.0 1462.0,370.0 1523.2,307.7" fill="none" stroke="#ff4164" stroke-width="10" stroke-linecap="round" stroke-linejoin="round" opacity="0.8"/>
<polyline points="1178.2,510.6 1187.0,519.0 1187.0,592.0 1421.0,827.5 1482.6,827.5" fill="none" stroke="#ff4164" stroke-width="10" stroke-linecap="round" stroke-linejoin="round" opacity="0.8"/>
<polyline points="1178.2,835.2 1185.0,828.0 1320.3,828.0" fill="none" stroke="#ff4164" stroke-width="10" stroke-linecap="round" stroke-linejoin="round" opacity="0.8"/>
<polyline points="513.0,668.0 640.5,796.0 640.5,825.0 650.0,834.5" fill="none" stroke="#ff4164" stroke-width="10" stroke-linecap="round" stroke-linejoin="round" opacity="0.8"/>
<polyline points="1320.3,633.5 1530.0,633.5" fill="none" stroke="#ff4164" stroke-width="10" stroke-linecap="round" stroke-linejoin="round" opacity="0.8"/>
<polyline points="1320.3,467.5 1530.0,467.5" fill="none" stroke="#ff4164" stroke-width="10" stroke-linecap="round" stroke-linejoin="round" opacity="0.8"/>
<circle cx="652" cy="827" r="4.2" fill="#1580bd"/>
<line x1="650.69" y1="828.5" x2="1097" y2="828.5" stroke="#c4c4c4" stroke-width="1"/>
<text x="775" y="409.5" transform="rotate(0 775 409.5)" font-family="Liberation Sans,sans-serif" font-size="10.5" fill="rgba(215,215,215,0.72)" text-anchor="middle" dominant-baseline="central" textLength="17.5" lengthAdjust="spacingAndGlyphs">S$2</text>
<text x="889" y="409.5" transform="rotate(0 889 409.5)" font-family="Liberation Sans,sans-serif" font-size="10.5" fill="rgba(215,215,215,0.72)" text-anchor="middle" dominant-baseline="central" textLength="17.5" lengthAdjust="spacingAndGlyphs">S$2</text>
<text x="1004" y="409.5" transform="rotate(0 1004 409.5)" font-family="Liberation Sans,sans-serif" font-size="10.5" fill="rgba(215,215,215,0.72)" text-anchor="middle" dominant-baseline="central" textLength="17.5" lengthAdjust="spacingAndGlyphs">S$2</text>
<text x="612" y="457" transform="rotate(-45 612 457)" font-family="Liberation Sans,sans-serif" font-size="10.5" fill="rgba(215,215,215,0.72)" text-anchor="middle" dominant-baseline="central" textLength="17.5" lengthAdjust="spacingAndGlyphs">S$2</text>
<text x="539" y="507.5" transform="rotate(0 539 507.5)" font-family="Liberation Sans,sans-serif" font-size="10.5" fill="rgba(215,215,215,0.72)" text-anchor="middle" dominant-baseline="central" textLength="17.5" lengthAdjust="spacingAndGlyphs">S$2</text>
<text x="1152" y="377" transform="rotate(-45 1152 377)" font-family="Liberation Sans,sans-serif" font-size="10.5" fill="rgba(215,215,215,0.72)" text-anchor="middle" dominant-baseline="central" textLength="17.5" lengthAdjust="spacingAndGlyphs">S$2</text>
<text x="753" y="507.5" transform="rotate(0 753 507.5)" font-family="Liberation Sans,sans-serif" font-size="10.5" fill="rgba(215,215,215,0.72)" text-anchor="middle" dominant-baseline="central" textLength="17.5" lengthAdjust="spacingAndGlyphs">S$5</text>
<text x="855" y="507.5" transform="rotate(0 855 507.5)" font-family="Liberation Sans,sans-serif" font-size="10.5" fill="rgba(215,215,215,0.72)" text-anchor="middle" dominant-baseline="central" textLength="17.5" lengthAdjust="spacingAndGlyphs">S$5</text>
<text x="957" y="507.5" transform="rotate(0 957 507.5)" font-family="Liberation Sans,sans-serif" font-size="10.5" fill="rgba(215,215,215,0.72)" text-anchor="middle" dominant-baseline="central" textLength="17.5" lengthAdjust="spacingAndGlyphs">S$5</text>
<text x="1186" y="409.5" transform="rotate(0 1186 409.5)" font-family="Liberation Sans,sans-serif" font-size="10.5" fill="rgba(215,215,215,0.72)" text-anchor="middle" dominant-baseline="central" textLength="17.5" lengthAdjust="spacingAndGlyphs">S$5</text>
<text x="1108" y="458" transform="rotate(-45 1108 458)" font-family="Liberation Sans,sans-serif" font-size="10.5" fill="rgba(215,215,215,0.72)" text-anchor="middle" dominant-baseline="central" textLength="17.5" lengthAdjust="spacingAndGlyphs">S$5</text>
<text x="1268" y="357" transform="rotate(-45 1268 357)" font-family="Liberation Sans,sans-serif" font-size="10.5" fill="rgba(215,215,215,0.72)" text-anchor="middle" dominant-baseline="central" textLength="17.5" lengthAdjust="spacingAndGlyphs">S$5</text>
<text x="741" y="672" transform="rotate(0 741 672)" font-family="Liberation Sans,sans-serif" font-size="10.5" fill="rgba(215,215,215,0.72)" text-anchor="middle" dominant-baseline="central" textLength="17.5" lengthAdjust="spacingAndGlyphs">S$6</text>
<text x="832" y="672" transform="rotate(0 832 672)" font-family="Liberation Sans,sans-serif" font-size="10.5" fill="rgba(215,215,215,0.72)" text-anchor="middle" dominant-baseline="central" textLength="17.5" lengthAdjust="spacingAndGlyphs">S$6</text>
<text x="1004" y="591" transform="rotate(-45 1004 591)" font-family="Liberation Sans,sans-serif" font-size="10.5" fill="rgba(215,215,215,0.72)" text-anchor="middle" dominant-baseline="central" textLength="17.5" lengthAdjust="spacingAndGlyphs">S$6</text>
<text x="1085" y="511" transform="rotate(-45 1085 511)" font-family="Liberation Sans,sans-serif" font-size="10.5" fill="rgba(215,215,215,0.72)" text-anchor="middle" dominant-baseline="central" textLength="17.5" lengthAdjust="spacingAndGlyphs">S$6</text>
<text x="1215" y="429.5" transform="rotate(0 1215 429.5)" font-family="Liberation Sans,sans-serif" font-size="10.5" fill="rgba(215,215,215,0.72)" text-anchor="middle" dominant-baseline="central" textLength="17.5" lengthAdjust="spacingAndGlyphs">S$6</text>
<text x="1293" y="400" transform="rotate(-45 1293 400)" font-family="Liberation Sans,sans-serif" font-size="10.5" fill="rgba(215,215,215,0.72)" text-anchor="middle" dominant-baseline="central" textLength="17.5" lengthAdjust="spacingAndGlyphs">S$6</text>
<text x="1390" y="370.5" transform="rotate(0 1390 370.5)" font-family="Liberation Sans,sans-serif" font-size="10.5" fill="rgba(215,215,215,0.72)" text-anchor="middle" dominant-baseline="central" textLength="17.5" lengthAdjust="spacingAndGlyphs">S$6</text>
<text x="1483" y="348" transform="rotate(-45 1483 348)" font-family="Liberation Sans,sans-serif" font-size="10.5" fill="rgba(215,215,215,0.72)" text-anchor="middle" dominant-baseline="central" textLength="17.5" lengthAdjust="spacingAndGlyphs">S$6</text>
<text x="1187" y="557" transform="rotate(-90 1187 557)" font-family="Liberation Sans,sans-serif" font-size="10.5" fill="rgba(215,215,215,0.72)" text-anchor="middle" dominant-baseline="central" textLength="17.5" lengthAdjust="spacingAndGlyphs">S$3</text>
<text x="1262" y="668" transform="rotate(45 1262 668)" font-family="Liberation Sans,sans-serif" font-size="10.5" fill="rgba(215,215,215,0.72)" text-anchor="middle" dominant-baseline="central" textLength="17.5" lengthAdjust="spacingAndGlyphs">S$3</text>
<text x="1343" y="750" transform="rotate(45 1343 750)" font-family="Liberation Sans,sans-serif" font-size="10.5" fill="rgba(215,215,215,0.72)" text-anchor="middle" dominant-baseline="central" textLength="17.5" lengthAdjust="spacingAndGlyphs">S$3</text>
<text x="1450" y="828" transform="rotate(0 1450 828)" font-family="Liberation Sans,sans-serif" font-size="10.5" fill="rgba(215,215,215,0.72)" text-anchor="middle" dominant-baseline="central" textLength="17.5" lengthAdjust="spacingAndGlyphs">S$3</text>
<text x="1249" y="828.5" transform="rotate(0 1249 828.5)" font-family="Liberation Sans,sans-serif" font-size="10.5" fill="rgba(215,215,215,0.72)" text-anchor="middle" dominant-baseline="central" textLength="17.5" lengthAdjust="spacingAndGlyphs">S$4</text>
<text x="1420" y="634" transform="rotate(0 1420 634)" font-family="Liberation Sans,sans-serif" font-size="10.5" fill="rgba(215,215,215,0.72)" text-anchor="middle" dominant-baseline="central" textLength="17.5" lengthAdjust="spacingAndGlyphs">S$1</text>
<text x="1420" y="468" transform="rotate(0 1420 468)" font-family="Liberation Sans,sans-serif" font-size="10.5" fill="rgba(215,215,215,0.72)" text-anchor="middle" dominant-baseline="central" textLength="17.5" lengthAdjust="spacingAndGlyphs">S$2</text>
<text x="579" y="737" transform="rotate(45 579 737)" font-family="Liberation Sans,sans-serif" font-size="10.5" fill="rgba(215,215,215,0.72)" text-anchor="middle" dominant-baseline="central" textLength="17.5" lengthAdjust="spacingAndGlyphs">S$1</text>
<text x="1244" y="411" transform="rotate(45 1244 411)" font-family="Liberation Sans,sans-serif" font-size="10.5" fill="rgba(215,215,215,0.72)" text-anchor="middle" dominant-baseline="central" textLength="17.5" lengthAdjust="spacingAndGlyphs">S$2</text>
<text x="1254" y="603" transform="rotate(-45 1254 603)" font-family="Liberation Sans,sans-serif" font-size="10.5" fill="rgba(215,215,215,0.72)" text-anchor="middle" dominant-baseline="central" textLength="17.5" lengthAdjust="spacingAndGlyphs">S$7</text>
<text x="1342" y="536.5" transform="rotate(0 1342 536.5)" font-family="Liberation Sans,sans-serif" font-size="10.5" fill="rgba(215,215,215,0.72)" text-anchor="middle" dominant-baseline="central" textLength="17.5" lengthAdjust="spacingAndGlyphs">S$7</text>
<text x="1470" y="426" transform="rotate(-45 1470 426)" font-family="Liberation Sans,sans-serif" font-size="10.5" fill="rgba(215,215,215,0.72)" text-anchor="middle" dominant-baseline="central" textLength="17.5" lengthAdjust="spacingAndGlyphs">S$7</text>
<text x="1142" y="788" transform="rotate(-45 1142 788)" font-family="Liberation Sans,sans-serif" font-size="10.5" fill="rgba(215,215,215,0.72)" text-anchor="middle" dominant-baseline="central" textLength="17.5" lengthAdjust="spacingAndGlyphs">S$1</text>
<text x="1258" y="688" transform="rotate(-45 1258 688)" font-family="Liberation Sans,sans-serif" font-size="10.5" fill="rgba(215,215,215,0.72)" text-anchor="middle" dominant-baseline="central" textLength="17.5" lengthAdjust="spacingAndGlyphs">S$1</text>
<polygon points="703.4,267.1 1125.5,267.1 1125.5,916.4 703.4,916.4" fill="none" stroke="rgba(206,206,206,0.786)" stroke-width="9" stroke-linecap="round" stroke-linejoin="round"/>
<polyline points="703.4,267.1 703.4,285.3" fill="none" stroke="rgba(206,206,206,0.786)" stroke-width="9" stroke-linecap="butt" stroke-linejoin="round"/>
<polyline points="1125.5,267.1 1125.5,289.4" fill="none" stroke="rgba(206,206,206,0.786)" stroke-width="9" stroke-linecap="butt" stroke-linejoin="round"/>
<polyline points="703.4,916.4 703.4,892.0" fill="none" stroke="rgba(206,206,206,0.786)" stroke-width="9" stroke-linecap="butt" stroke-linejoin="round"/>
<polyline points="1125.5,916.4 1125.5,892.0" fill="none" stroke="rgba(206,206,206,0.786)" stroke-width="9" stroke-linecap="butt" stroke-linejoin="round"/>
<polygon points="1239.1,267.1 1279.7,226.5 1360.8,226.5 1401.4,267.1 1401.4,348.2 1360.8,388.8 1279.7,388.8 1239.1,348.2" fill="none" stroke="rgba(206,206,206,0.786)" stroke-width="9.7" stroke-linecap="round" stroke-linejoin="round"/>
<rect x="1304.0" y="291.4" width="32.6" height="32.6" fill="rgba(206,206,206,0.786)"/>
<polygon points="1239.1,429.4 1279.7,388.8 1360.8,388.8 1401.4,429.4 1401.4,510.6 1360.8,551.1 1279.7,551.1 1239.1,510.6" fill="none" stroke="rgba(206,206,206,0.786)" stroke-width="9.7" stroke-linecap="round" stroke-linejoin="round"/>
<rect x="1304.0" y="453.7" width="32.6" height="32.6" fill="rgba(206,206,206,0.786)"/>
<polygon points="1239.1,591.7 1279.7,551.1 1360.8,551.1 1401.4,591.7 1401.4,672.9 1360.8,713.5 1279.7,713.5 1239.1,672.9" fill="none" stroke="rgba(206,206,206,0.786)" stroke-width="9.7" stroke-linecap="round" stroke-linejoin="round"/>
<rect x="1304.0" y="616.0" width="32.6" height="32.6" fill="rgba(206,206,206,0.786)"/>
<polygon points="1239.1,794.6 1279.7,754.0 1360.8,754.0 1401.4,794.6 1401.4,875.8 1360.8,916.4 1279.7,916.4 1239.1,875.8" fill="none" stroke="rgba(206,206,206,0.786)" stroke-width="9.7" stroke-linecap="round" stroke-linejoin="round"/>
<rect x="1304.0" y="818.9" width="32.6" height="32.6" fill="rgba(206,206,206,0.786)"/>
<polygon points="1442.0,267.1 1482.6,226.5 1563.7,226.5 1604.3,267.1 1604.3,348.2 1563.7,388.8 1482.6,388.8 1442.0,348.2" fill="none" stroke="rgba(206,206,206,0.786)" stroke-width="9.7" stroke-linecap="round" stroke-linejoin="round"/>
<rect x="1506.9" y="291.4" width="32.6" height="32.6" fill="rgba(206,206,206,0.786)"/>
<polygon points="1442.0,429.4 1482.6,388.8 1563.7,388.8 1604.3,429.4 1604.3,510.6 1563.7,551.1 1482.6,551.1 1442.0,510.6" fill="none" stroke="rgba(206,206,206,0.786)" stroke-width="9.7" stroke-linecap="round" stroke-linejoin="round"/>
<rect x="1506.9" y="453.7" width="32.6" height="32.6" fill="rgba(206,206,206,0.786)"/>
<polygon points="1442.0,591.7 1482.6,551.1 1563.7,551.1 1604.3,591.7 1604.3,672.9 1563.7,713.5 1482.6,713.5 1442.0,672.9" fill="none" stroke="rgba(206,206,206,0.786)" stroke-width="9.7" stroke-linecap="round" stroke-linejoin="round"/>
<rect x="1506.9" y="616.0" width="32.6" height="32.6" fill="rgba(206,206,206,0.786)"/>
<polygon points="1401.4,794.6 1442.0,754.0 1523.2,754.0 1563.7,794.6 1563.7,875.8 1523.2,916.4 1442.0,916.4 1401.4,875.8" fill="none" stroke="rgba(206,206,206,0.786)" stroke-width="9.7" stroke-linecap="round" stroke-linejoin="round"/>
<rect x="1466.3" y="818.9" width="32.6" height="32.6" fill="rgba(206,206,206,0.786)"/>
<polygon points="427.5,470.0 468.1,429.4 549.2,429.4 589.8,470.0 589.8,551.1 549.2,591.7 468.1,591.7 427.5,551.1" fill="none" stroke="rgba(206,206,206,0.786)" stroke-width="9.7" stroke-linecap="round" stroke-linejoin="round"/>
<rect x="492.4" y="494.3" width="32.6" height="32.6" fill="rgba(206,206,206,0.786)"/>
<polygon points="427.5,632.3 468.1,591.7 549.2,591.7 589.8,632.3 589.8,713.5 549.2,754.0 468.1,754.0 427.5,713.5" fill="none" stroke="rgba(206,206,206,0.786)" stroke-width="9.7" stroke-linecap="round" stroke-linejoin="round"/>
<rect x="492.4" y="656.6" width="32.6" height="32.6" fill="rgba(206,206,206,0.786)"/>
<g opacity="0.786" font-family="Liberation Sans,sans-serif" font-size="114" fill="#cecece">
<text x="1234.8 1311.4 1372.4" y="191.3">E$2</text>
<text x="1234.8 1311.4 1372.4" y="353.6">E$3</text>
<text x="1234.8 1311.4 1372.4" y="515.9">E$4</text>
<text x="1234.8 1311.4 1372.4 1432.8" y="718.8">E$13</text>
<text x="1437.7 1514.3 1575.3" y="191.3">E$5</text>
<text x="1437.7 1514.3 1575.3" y="353.6">E$6</text>
<text x="1437.7 1514.3 1575.3" y="515.9">E$7</text>
<text x="1397.1 1473.7 1534.7 1595.1" y="718.8">E$14</text>
<text x="423.2 499.8 560.8 619.5" y="394.2">E$11</text>
<text x="423.2 499.8 560.8 621.2" y="556.5">E$12</text>
</g>
<circle cx="573.8" cy="348.7" r="15" fill="rgba(206,206,206,0.786)"/>
<path d="M1270.8,287.2 L1299.8,258.2 L1340.8,258.2 L1369.8,287.2 L1369.8,328.2 L1340.8,357.2 L1299.8,357.2 L1270.8,328.2ZM1288.8,307.7a31.5,31.5 0 1,0 63.0,0a31.5,31.5 0 1,0 -63.0,0Z" fill="rgba(102,216,132,0.7)" fill-rule="evenodd"/>
<path d="M1270.8,449.5 L1299.8,420.5 L1340.8,420.5 L1369.8,449.5 L1369.8,490.5 L1340.8,519.5 L1299.8,519.5 L1270.8,490.5ZM1288.8,470.0a31.5,31.5 0 1,0 63.0,0a31.5,31.5 0 1,0 -63.0,0Z" fill="rgba(102,216,132,0.7)" fill-rule="evenodd"/>
<path d="M1270.8,611.8 L1299.8,582.8 L1340.8,582.8 L1369.8,611.8 L1369.8,652.8 L1340.8,681.8 L1299.8,681.8 L1270.8,652.8ZM1288.8,632.3a31.5,31.5 0 1,0 63.0,0a31.5,31.5 0 1,0 -63.0,0Z" fill="rgba(102,216,132,0.7)" fill-rule="evenodd"/>
<path d="M1270.8,814.7 L1299.8,785.7 L1340.8,785.7 L1369.8,814.7 L1369.8,855.7 L1340.8,884.7 L1299.8,884.7 L1270.8,855.7ZM1288.8,835.2a31.5,31.5 0 1,0 63.0,0a31.5,31.5 0 1,0 -63.0,0Z" fill="rgba(102,216,132,0.7)" fill-rule="evenodd"/>
<path d="M1473.7,287.2 L1502.7,258.2 L1543.7,258.2 L1572.7,287.2 L1572.7,328.2 L1543.7,357.2 L1502.7,357.2 L1473.7,328.2ZM1491.7,307.7a31.5,31.5 0 1,0 63.0,0a31.5,31.5 0 1,0 -63.0,0Z" fill="rgba(102,216,132,0.7)" fill-rule="evenodd"/>
<path d="M1473.7,449.5 L1502.7,420.5 L1543.7,420.5 L1572.7,449.5 L1572.7,490.5 L1543.7,519.5 L1502.7,519.5 L1473.7,490.5ZM1491.7,470.0a31.5,31.5 0 1,0 63.0,0a31.5,31.5 0 1,0 -63.0,0Z" fill="rgba(102,216,132,0.7)" fill-rule="evenodd"/>
<path d="M1473.7,611.8 L1502.7,582.8 L1543.7,582.8 L1572.7,611.8 L1572.7,652.8 L1543.7,681.8 L1502.7,681.8 L1473.7,652.8ZM1491.7,632.3a31.5,31.5 0 1,0 63.0,0a31.5,31.5 0 1,0 -63.0,0Z" fill="rgba(102,216,132,0.7)" fill-rule="evenodd"/>
<path d="M1433.1,814.7 L1462.1,785.7 L1503.1,785.7 L1532.1,814.7 L1532.1,855.7 L1503.1,884.7 L1462.1,884.7 L1433.1,855.7ZM1451.1,835.2a31.5,31.5 0 1,0 63.0,0a31.5,31.5 0 1,0 -63.0,0Z" fill="rgba(102,216,132,0.7)" fill-rule="evenodd"/>
<path d="M459.2,490.1 L488.2,461.1 L529.2,461.1 L558.2,490.1 L558.2,531.1 L529.2,560.1 L488.2,560.1 L459.2,531.1ZM477.2,510.6a31.5,31.5 0 1,0 63.0,0a31.5,31.5 0 1,0 -63.0,0Z" fill="rgba(102,216,132,0.7)" fill-rule="evenodd"/>
<path d="M459.2,652.4 L488.2,623.4 L529.2,623.4 L558.2,652.4 L558.2,693.4 L529.2,722.4 L488.2,722.4 L459.2,693.4ZM477.2,672.9a31.5,31.5 0 1,0 63.0,0a31.5,31.5 0 1,0 -63.0,0Z" fill="rgba(102,216,132,0.7)" fill-rule="evenodd"/>
<path d="M606.2,348.2a44.5,44.5 0 1,0 89.0,0a44.5,44.5 0 1,0 -89.0,0ZM626.2,348.2a24.5,24.5 0 1,0 49.0,0a24.5,24.5 0 1,0 -49.0,0Z" fill="rgba(102,216,132,0.7)" fill-rule="evenodd"/>
<path d="M606.2,510.6a44.5,44.5 0 1,0 89.0,0a44.5,44.5 0 1,0 -89.0,0ZM626.2,510.6a24.5,24.5 0 1,0 49.0,0a24.5,24.5 0 1,0 -49.0,0Z" fill="rgba(102,216,132,0.7)" fill-rule="evenodd"/>
<path d="M606.2,672.9a44.5,44.5 0 1,0 89.0,0a44.5,44.5 0 1,0 -89.0,0ZM626.2,672.9a24.5,24.5 0 1,0 49.0,0a24.5,24.5 0 1,0 -49.0,0Z" fill="rgba(102,216,132,0.7)" fill-rule="evenodd"/>
<path d="M606.2,835.2a44.5,44.5 0 1,0 89.0,0a44.5,44.5 0 1,0 -89.0,0ZM626.2,835.2a24.5,24.5 0 1,0 49.0,0a24.5,24.5 0 1,0 -49.0,0Z" fill="rgba(102,216,132,0.7)" fill-rule="evenodd"/>
<path d="M1133.7,835.2a44.5,44.5 0 1,0 89.0,0a44.5,44.5 0 1,0 -89.0,0ZM1153.7,835.2a24.5,24.5 0 1,0 49.0,0a24.5,24.5 0 1,0 -49.0,0Z" fill="rgba(102,216,132,0.7)" fill-rule="evenodd"/>
<path d="M1133.7,672.9a44.5,44.5 0 1,0 89.0,0a44.5,44.5 0 1,0 -89.0,0ZM1153.7,672.9a24.5,24.5 0 1,0 49.0,0a24.5,24.5 0 1,0 -49.0,0Z" fill="rgba(102,216,132,0.7)" fill-rule="evenodd"/>
<path d="M1133.7,510.6a44.5,44.5 0 1,0 89.0,0a44.5,44.5 0 1,0 -89.0,0ZM1153.7,510.6a24.5,24.5 0 1,0 49.0,0a24.5,24.5 0 1,0 -49.0,0Z" fill="rgba(102,216,132,0.7)" fill-rule="evenodd"/>
<path d="M1133.7,348.2a44.5,44.5 0 1,0 89.0,0a44.5,44.5 0 1,0 -89.0,0ZM1153.7,348.2a24.5,24.5 0 1,0 49.0,0a24.5,24.5 0 1,0 -49.0,0Z" fill="rgba(102,216,132,0.7)" fill-rule="evenodd"/>
<polyline points="380.0,436.3 589.8,226.5 1198.5,226.5 1258.5,166.5" fill="none" stroke="rgba(102,216,132,0.7)" stroke-width="10" stroke-linejoin="miter" transform="translate(0 -0.5)"/>
<polyline points="1524.0,956.9 589.8,956.9 380.0,747.1" fill="none" stroke="rgba(102,216,132,0.7)" stroke-width="10" stroke-linejoin="miter" transform="translate(0 -0.5)"/>
<text x="650.7" y="345.8" font-family="Liberation Sans,sans-serif" font-size="27.5" fill="#979797" text-anchor="middle">1</text>
<text x="650.7" y="508.2" font-family="Liberation Sans,sans-serif" font-size="27.5" fill="#979797" text-anchor="middle">2</text>
<text x="650.7" y="532.4" font-family="Liberation Sans,sans-serif" font-size="27.5" letter-spacing="1.3" fill="#979797" text-anchor="middle">S$5</text>
<text x="650.7" y="670.5" font-family="Liberation Sans,sans-serif" font-size="27.5" fill="#979797" text-anchor="middle">3</text>
<text x="650.7" y="694.7" font-family="Liberation Sans,sans-serif" font-size="27.5" letter-spacing="1.3" fill="#979797" text-anchor="middle">S$6</text>
<text x="650.7" y="832.8" font-family="Liberation Sans,sans-serif" font-size="27.5" fill="#979797" text-anchor="middle">4</text>
<text x="650.7" y="857.0" font-family="Liberation Sans,sans-serif" font-size="27.5" letter-spacing="1.3" fill="#979797" text-anchor="middle">S$1</text>
<text x="1178.2" y="832.8" font-family="Liberation Sans,sans-serif" font-size="27.5" fill="#979797" text-anchor="middle">5</text>
<text x="1178.2" y="857.0" font-family="Liberation Sans,sans-serif" font-size="27.5" letter-spacing="1.3" fill="#979797" text-anchor="middle">S$4</text>
<text x="1178.2" y="670.5" font-family="Liberation Sans,sans-serif" font-size="27.5" fill="#979797" text-anchor="middle">6</text>
<text x="1178.2" y="694.7" font-family="Liberation Sans,sans-serif" font-size="27.5" letter-spacing="1.3" fill="#979797" text-anchor="middle">S$7</text>
<text x="1178.2" y="508.2" font-family="Liberation Sans,sans-serif" font-size="27.5" fill="#979797" text-anchor="middle">7</text>
<text x="1178.2" y="532.4" font-family="Liberation Sans,sans-serif" font-size="27.5" letter-spacing="1.3" fill="#979797" text-anchor="middle">S$3</text>
<text x="1178.2" y="345.8" font-family="Liberation Sans,sans-serif" font-size="27.5" fill="#979797" text-anchor="middle">8</text>
<text x="1178.2" y="370.0" font-family="Liberation Sans,sans-serif" font-size="27.5" letter-spacing="1.3" fill="#979797" text-anchor="middle">S$2</text>
<text x="1320.3" y="303.7" font-family="Liberation Sans,sans-serif" font-size="31" fill="#979797" text-anchor="middle">1</text>
<text x="1320.3" y="331.5" font-family="Liberation Sans,sans-serif" font-size="31" letter-spacing="0.6" fill="#979797" text-anchor="middle">S$5</text>
<text x="1320.3" y="466.0" font-family="Liberation Sans,sans-serif" font-size="31" fill="#979797" text-anchor="middle">1</text>
<text x="1320.3" y="493.8" font-family="Liberation Sans,sans-serif" font-size="31" letter-spacing="0.6" fill="#979797" text-anchor="middle">S$2</text>
<text x="1320.3" y="628.3" font-family="Liberation Sans,sans-serif" font-size="31" fill="#979797" text-anchor="middle">1</text>
<text x="1320.3" y="656.1" font-family="Liberation Sans,sans-serif" font-size="31" letter-spacing="0.6" fill="#979797" text-anchor="middle">S$1</text>
<text x="1320.3" y="831.2" font-family="Liberation Sans,sans-serif" font-size="31" fill="#979797" text-anchor="middle">1</text>
<text x="1320.3" y="859.0" font-family="Liberation Sans,sans-serif" font-size="31" letter-spacing="0.6" fill="#979797" text-anchor="middle">S$4</text>
<text x="1523.2" y="303.7" font-family="Liberation Sans,sans-serif" font-size="31" fill="#979797" text-anchor="middle">1</text>
<text x="1523.2" y="331.5" font-family="Liberation Sans,sans-serif" font-size="31" letter-spacing="0.6" fill="#979797" text-anchor="middle">S$6</text>
<text x="1523.2" y="466.0" font-family="Liberation Sans,sans-serif" font-size="31" fill="#979797" text-anchor="middle">1</text>
<text x="1523.2" y="493.8" font-family="Liberation Sans,sans-serif" font-size="31" letter-spacing="0.6" fill="#979797" text-anchor="middle">S$2</text>
<text x="1523.2" y="628.3" font-family="Liberation Sans,sans-serif" font-size="31" fill="#979797" text-anchor="middle">1</text>
<text x="1523.2" y="656.1" font-family="Liberation Sans,sans-serif" font-size="31" letter-spacing="0.6" fill="#979797" text-anchor="middle">S$1</text>
<text x="1482.6" y="831.2" font-family="Liberation Sans,sans-serif" font-size="31" fill="#979797" text-anchor="middle">1</text>
<text x="1482.6" y="859.0" font-family="Liberation Sans,sans-serif" font-size="31" letter-spacing="0.6" fill="#979797" text-anchor="middle">S$3</text>
<text x="508.7" y="506.6" font-family="Liberation Sans,sans-serif" font-size="31" fill="#979797" text-anchor="middle">1</text>
<text x="508.7" y="534.4" font-family="Liberation Sans,sans-serif" font-size="31" letter-spacing="0.6" fill="#979797" text-anchor="middle">S$2</text>
<text x="508.7" y="668.9" font-family="Liberation Sans,sans-serif" font-size="31" fill="#979797" text-anchor="middle">1</text>
<text x="508.7" y="696.7" font-family="Liberation Sans,sans-serif" font-size="31" letter-spacing="0.6" fill="#979797" text-anchor="middle">S$1</text>
<line x1="914.5" y1="525" x2="914.5" y2="657" stroke="#bdbdbd" stroke-width="1"/>
<line x1="849" y1="590.5" x2="980" y2="590.5" stroke="#bdbdbd" stroke-width="1"/>
<line x1="1289.26" y1="307.5" x2="1351.26" y2="307.5" stroke="#bcbcbc" stroke-width="1"/>
<line x1="1320.5" y1="276.66" x2="1320.5" y2="338.66" stroke="#bcbcbc" stroke-width="1"/>
<line x1="1234.76" y1="158.66000000000003" x2="1234.76" y2="224.66000000000003" stroke="#a8a8a8" stroke-width="1"/>
<line x1="1201.76" y1="191.66000000000003" x2="1267.76" y2="191.66000000000003" stroke="#a8a8a8" stroke-width="1"/>
<line x1="1289.26" y1="469.5" x2="1351.26" y2="469.5" stroke="#bcbcbc" stroke-width="1"/>
<line x1="1320.5" y1="438.98" x2="1320.5" y2="500.98" stroke="#bcbcbc" stroke-width="1"/>
<line x1="1234.76" y1="320.98" x2="1234.76" y2="386.98" stroke="#a8a8a8" stroke-width="1"/>
<line x1="1201.76" y1="353.98" x2="1267.76" y2="353.98" stroke="#a8a8a8" stroke-width="1"/>
<line x1="1289.26" y1="632.5" x2="1351.26" y2="632.5" stroke="#bcbcbc" stroke-width="1"/>
<line x1="1320.5" y1="601.3" x2="1320.5" y2="663.3" stroke="#bcbcbc" stroke-width="1"/>
<line x1="1234.76" y1="483.29999999999995" x2="1234.76" y2="549.3" stroke="#a8a8a8" stroke-width="1"/>
<line x1="1201.76" y1="516.3" x2="1267.76" y2="516.3" stroke="#a8a8a8" stroke-width="1"/>
<line x1="1289.26" y1="835.5" x2="1351.26" y2="835.5" stroke="#bcbcbc" stroke-width="1"/>
<line x1="1320.5" y1="804.2" x2="1320.5" y2="866.2" stroke="#bcbcbc" stroke-width="1"/>
<line x1="1234.76" y1="686.2" x2="1234.76" y2="752.2" stroke="#a8a8a8" stroke-width="1"/>
<line x1="1201.76" y1="719.2" x2="1267.76" y2="719.2" stroke="#a8a8a8" stroke-width="1"/>
<line x1="1492.16" y1="307.5" x2="1554.16" y2="307.5" stroke="#bcbcbc" stroke-width="1"/>
<line x1="1523.5" y1="276.66" x2="1523.5" y2="338.66" stroke="#bcbcbc" stroke-width="1"/>
<line x1="1437.66" y1="158.66000000000003" x2="1437.66" y2="224.66000000000003" stroke="#a8a8a8" stroke-width="1"/>
<line x1="1404.66" y1="191.66000000000003" x2="1470.66" y2="191.66000000000003" stroke="#a8a8a8" stroke-width="1"/>
<line x1="1492.16" y1="469.5" x2="1554.16" y2="469.5" stroke="#bcbcbc" stroke-width="1"/>
<line x1="1523.5" y1="438.98" x2="1523.5" y2="500.98" stroke="#bcbcbc" stroke-width="1"/>
<line x1="1437.66" y1="320.98" x2="1437.66" y2="386.98" stroke="#a8a8a8" stroke-width="1"/>
<line x1="1404.66" y1="353.98" x2="1470.66" y2="353.98" stroke="#a8a8a8" stroke-width="1"/>
<line x1="1492.16" y1="632.5" x2="1554.16" y2="632.5" stroke="#bcbcbc" stroke-width="1"/>
<line x1="1523.5" y1="601.3" x2="1523.5" y2="663.3" stroke="#bcbcbc" stroke-width="1"/>
<line x1="1437.66" y1="483.29999999999995" x2="1437.66" y2="549.3" stroke="#a8a8a8" stroke-width="1"/>
<line x1="1404.66" y1="516.3" x2="1470.66" y2="516.3" stroke="#a8a8a8" stroke-width="1"/>
<line x1="1451.58" y1="835.5" x2="1513.58" y2="835.5" stroke="#bcbcbc" stroke-width="1"/>
<line x1="1482.5" y1="804.2" x2="1482.5" y2="866.2" stroke="#bcbcbc" stroke-width="1"/>
<line x1="1397.08" y1="686.2" x2="1397.08" y2="752.2" stroke="#a8a8a8" stroke-width="1"/>
<line x1="1364.08" y1="719.2" x2="1430.08" y2="719.2" stroke="#a8a8a8" stroke-width="1"/>
<line x1="477.66" y1="510.5" x2="539.6600000000001" y2="510.5" stroke="#bcbcbc" stroke-width="1"/>
<line x1="508.5" y1="479.56" x2="508.5" y2="541.56" stroke="#bcbcbc" stroke-width="1"/>
<line x1="423.16" y1="361.56" x2="423.16" y2="427.56" stroke="#a8a8a8" stroke-width="1"/>
<line x1="390.16" y1="394.56" x2="456.16" y2="394.56" stroke="#a8a8a8" stroke-width="1"/>
<line x1="477.66" y1="672.5" x2="539.6600000000001" y2="672.5" stroke="#bcbcbc" stroke-width="1"/>
<line x1="508.5" y1="641.88" x2="508.5" y2="703.88" stroke="#bcbcbc" stroke-width="1"/>
<line x1="423.16" y1="523.88" x2="423.16" y2="589.88" stroke="#a8a8a8" stroke-width="1"/>
<line x1="390.16" y1="556.88" x2="456.16" y2="556.88" stroke="#a8a8a8" stroke-width="1"/>
<path d="M427.5,203V1034M468.5,203V1034M508.5,203V1034M549.5,203V1034M589.5,203V1034M630.5,203V1034M670.5,203V1034M711.5,203V1034M752.5,203V1034M792.5,203V1034M833.5,203V1034M873.5,203V1034M914.5,203V1034M955.5,203V1034M995.5,203V1034M1036.5,203V1034M1076.5,203V1034M1117.5,203V1034M1157.5,203V1034M1198.5,203V1034M1239.5,203V1034M1279.5,203V1034M1320.5,203V1034M1360.5,203V1034M1401.5,203V1034M1442.5,203V1034M1482.5,203V1034M400,226.5H1504M400,267.5H1504M400,307.5H1504M400,348.5H1504M400,388.5H1504M400,429.5H1504M400,469.5H1504M400,510.5H1504M400,551.5H1504M400,591.5H1504M400,632.5H1504M400,672.5H1504M400,713.5H1504M400,754.5H1504M400,794.5H1504M400,835.5H1504M400,875.5H1504M400,916.5H1504M400,956.5H1504M400,997.5H1504" stroke="rgba(100,100,100,0.58)" stroke-width="1" fill="none" shape-rendering="crispEdges"/>
</svg>
<!-- right panel -->
<div class="abs" style="left:1504px;top:203px;width:16px;height:831px;background:repeating-conic-gradient(#f3f3f3 0 25%,#d6d6d6 0 50%) 0 0/2px 2px"></div>
<div class="abs" style="left:1508.500px;top:716px;width:7px;height:93px;background:#b8b8b8"></div><div class="abs" style="left:1510px;top:718px;width:4.500px;height:90px;background:#989898;border-radius:2px"></div>
<div class="abs" style="left:400px;top:1034px;width:1104px;height:16px;background:repeating-conic-gradient(#f3f3f3 0 25%,#d6d6d6 0 50%) 0 0/2px 2px"></div>
<div class="abs" style="left:587px;top:1035px;width:101px;height:15px;background:#c9c9c9"></div><div class="abs" style="left:586px;top:1039.500px;width:103px;height:5.500px;background:#9b9b9b;border-radius:2.500px"></div>
<div class="abs" style="left:1504px;top:1034px;width:16px;height:16px;background:#c9c9c9"></div>
<svg class="abs" style="left:1520px;top:170px" width="400" height="24" viewBox="1520 170 400 24"><path d="M1522.500 176.500v10.500M1524.500 176.500v10.500" stroke="#777" stroke-width="1"/><circle cx="1536.300" cy="181.300" r="4.500" fill="#111"/><rect x="1533.800" y="180.600" width="5" height="1.400" fill="#f2f2f2"/><path d="M1909.500 182l-4.500-3.200v6.400zM1914.700 182l-4.500-3.200v6.400z" fill="#222"/></svg>
<div class="hdr" style="left:1545px;top:175.500px;transform:scaleX(.8);transform-origin:0 0">INSPECTOR</div>
<div class="t" style="left:1620px;width:200px;text-align:center;top:201px;font-size:12.8px;font-weight:bold;color:#111">Nothing Selected</div>
<div class="abs" style="left:1521px;top:223px;width:399px;height:24px;background:#f7f7f7"></div>
<div class="abs" style="left:1522px;top:223px;width:24px;height:24px;background:#0696d7;border-radius:2px"></div>
<svg class="abs" style="left:1528px;top:231px" width="11" height="7" viewBox="0 0 11 7"><path d="M0.500 0.500h10l-5 5.500z" fill="#111"/></svg>
<div class="t" style="left:1548px;top:228.500px;font-size:13.55px;font-weight:bold;color:#111">Board Information</div>
<div class="lbl" style="left:1523.500px;top:255.0px">Dimensions</div>
<div class="k" style="left:1640px;top:256.0px">Width:</div><div class="k" style="left:1720px;top:256.0px">25.00598125 mm</div>
<div class="k" style="left:1640px;top:278.0px">Height:</div><div class="k" style="left:1720px;top:278.0px">13.916659375 mm</div>
<div class="lbl" style="left:1523.500px;top:321.0px">Elements</div>
<div class="k" style="left:1640px;top:322.0px">Total:</div><div class="k" style="left:1720px;top:322.0px">16</div>
<div class="k" style="left:1640px;top:344.0px">Top:</div><div class="k" style="left:1720px;top:344.0px">16</div>
<div class="k" style="left:1640px;top:366.0px">Bottom:</div><div class="k" style="left:1720px;top:366.0px">0</div>
<div class="lbl" style="left:1523.500px;top:409.0px">Signals</div>
<div class="k" style="left:1640px;top:410.0px">Total:</div><div class="k" style="left:1720px;top:410.0px">7</div>
<div class="k" style="left:1640px;top:432.0px">Airwires:</div><div class="k" style="left:1720px;top:432.0px">1</div>
<div class="lbl" style="left:1523.500px;top:475.0px">Primitives</div>
<div class="k" style="left:1640px;top:476.0px">Pads:</div><div class="k" style="left:1720px;top:476.0px">23</div>
<div class="k" style="left:1640px;top:498.0px">Vias:</div><div class="k" style="left:1720px;top:498.0px">0</div>
<div class="k" style="left:1640px;top:520.0px">Holes:</div><div class="k" style="left:1720px;top:520.0px">0</div>
<div class="k" style="left:1640px;top:542.0px">Copper Pours:</div><div class="k" style="left:1720px;top:542.0px">0</div>
<svg class="abs" style="left:1520px;top:612px" width="40" height="20" viewBox="1520 612 40 20"><path d="M1522.500 617v10.500M1524.500 617v10.500" stroke="#777" stroke-width="1"/><circle cx="1536.300" cy="622" r="4.500" fill="#111"/><rect x="1533.800" y="621.300" width="5" height="1.400" fill="#f2f2f2"/></svg>
<div class="hdr" style="left:1545px;top:616.500px;transform:scaleX(.805);transform-origin:0 0">SELECTION FILTER</div>
<div class="abs" style="left:1520px;top:632px;width:399px;height:418px;border:1px solid #8a8a8a;border-right-color:#9a9a9a"></div>
<div class="t tah" style="left:1522px;top:634.500px">Types</div>
<div class="abs" style="left:1521px;top:653.500px;width:397px;height:149px;background:#fff;border-top:1px solid #9a9a9a;border-bottom:1px solid #9a9a9a"></div>
<div class="abs sel" style="left:1521.500px;top:654px;width:380.500px;height:148px"></div>
<div class="abs" style="left:1907px;top:654.500px;width:5.500px;height:67.500px;background:#8c8c8c;border-radius:2.500px"></div>
<div class="t tah" style="left:1547px;top:658.5px;color:#fff">Airwire</div>
<div class="t tah" style="left:1547px;top:678.5px;color:#fff">Attribute</div>
<div class="t tah" style="left:1547px;top:698.5px;color:#fff">Circle</div>
<div class="t tah" style="left:1547px;top:718.5px;color:#fff">Device</div>
<div class="t tah" style="left:1547px;top:738.5px;color:#fff">Dimension</div>
<div class="t tah" style="left:1547px;top:758.5px;color:#fff">Frame</div>
<div class="t tah" style="left:1547px;top:778.5px;color:#fff">Group</div>
<div class="abs" style="left:1547px;top:797px;width:40px;height:5px;overflow:hidden"><div class="t tah" style="left:0;top:0.500px;color:#fff">Hole</div></div>
<svg class="abs" style="left:1524px;top:654px" width="18" height="148" viewBox="1524 654 18 148" fill="none">
<g stroke="#2a78c0" stroke-width="0.800"><circle cx="1527" cy="658.500" r="1.300"/><circle cx="1538" cy="658.500" r="1.300"/><circle cx="1538" cy="670" r="1.300"/><path d="M1538 661v6" stroke-dasharray="1 1.500"/></g>
<path d="M1526 676.500h6l8 8-5.500 5.500-8.500-8.500z" stroke="#2a7fc4" stroke-width="1"/><path d="M1531 681l5 5M1529.500 683l4 4" stroke="#2a7fc4" stroke-width="0.800"/>
<circle cx="1533" cy="704.200" r="7.200" fill="#b9dcf5" stroke="#3f8ed0" stroke-width="1"/>
<path d="M1528.500 717.500h9l2.500 6h-14z" fill="#5d7896"/><path d="M1525.500 724h15.500v5.500h-15.500z" fill="#e8eef5"/><path d="M1527.500 724v5M1530.500 724v5M1533.500 724v5M1536.500 724v5M1539 724v5" stroke="#3a4f6a" stroke-width="1"/><path d="M1525 730h16" stroke="#3a6a9a" stroke-width="1.200"/>
<path d="M1525.500 736.500v15.500M1540.500 736.500v15.500" stroke="#6f87a8" stroke-width="1.200"/><path d="M1527.500 740.500h11" stroke="#223a5a" stroke-width="1"/><path d="M1529.500 738.500l-2.500 2 2.500 2zM1536.500 738.500l2.500 2-2.500 2z" fill="#223a5a"/>
<rect x="1525.500" y="756.500" width="15" height="15" fill="#5f86b0" stroke="#27466e" stroke-width="1"/><rect x="1528.500" y="759.500" width="9" height="9" fill="#0a8fd4" stroke="#a8c3dc" stroke-width="1"/>
<rect x="1526" y="777" width="14.500" height="14.500" fill="#a9d3f2"/><rect x="1529.500" y="779" width="7" height="6" fill="#3f9be0" stroke="#2a78c0" stroke-width="0.800"/><circle cx="1533" cy="788" r="2.500" fill="#3f9be0" stroke="#2a78c0" stroke-width="0.800"/>
<rect x="1525.500" y="797" width="15" height="5.500" fill="#9fb6d0"/><path d="M1528 802a5 5 0 0 1 10 0z" fill="#2c4f84"/>
</svg>
<div class="t tah" style="left:1521.500px;top:809px">Layers</div>
<div class="abs" style="left:1521px;top:828px;width:397px;height:80px;background:#fff;border-top:1px solid #9a9a9a;border-bottom:1px solid #9a9a9a"></div>
<div class="t tah" style="left:1526px;top:831.5px">&lt;All&gt;</div>
<div class="alt" style="left:1522px;top:846px;width:396px;height:16px"></div>
<div class="t tah" style="left:1526px;top:847.5px">&lt;Preset_Bottom&gt;</div>
<div class="t tah" style="left:1526px;top:863.5px">&lt;Preset_Standard&gt;</div>
<div class="alt" style="left:1522px;top:878px;width:396px;height:16px"></div>
<div class="t tah" style="left:1526px;top:879.5px">&lt;Preset_Top&gt;</div>
<div class="abs" style="left:1521px;top:913.500px;width:397px;height:107.500px;background:#fff;border-top:1px solid #9a9a9a;border-bottom:1px solid #9a9a9a"></div>
<div class="abs sel" style="left:1521.500px;top:914px;width:380.500px;height:106.500px"></div>
<div class="abs" style="left:1907.500px;top:914.500px;width:5.500px;height:29px;background:#8c8c8c;border-radius:2.500px"></div>
<div class="abs" style="left:1525px;top:916.5px;width:16px;height:16px;background:#a04a72"></div><div class="t tah" style="left:1547.500px;top:918.7px;color:#fff">1 &nbsp;Top</div>
<div class="abs" style="left:1525px;top:936.5px;width:16px;height:16px;background:#1a7fbf"></div><div class="t tah" style="left:1547.500px;top:938.7px;color:#fff">16 Bottom</div>
<div class="abs" style="left:1525px;top:956.5px;width:16px;height:16px;background:#3f9e8b"></div><div class="t tah" style="left:1547.500px;top:958.7px;color:#fff">17 Pads</div>
<div class="abs" style="left:1525px;top:976.5px;width:16px;height:16px;background:#3f9e8b"></div><div class="t tah" style="left:1547.500px;top:978.7px;color:#fff">18 Vias</div>
<div class="abs" style="left:1525px;top:996.5px;width:16px;height:16px;background:#8d9cc4"></div><div class="t tah" style="left:1547.500px;top:998.7px;color:#fff">19 Unrouted</div>
<div class="abs" style="left:1525px;top:1016.500px;width:16px;height:4px;background:#3f9e8b"></div>
<div class="abs" style="left:1870px;top:1023px;width:48.500px;height:25.500px;background:#fff;border:1px solid #9a9a9a;border-radius:3.500px"></div><div class="t tah" style="left:1878px;top:1029.500px">Reset</div>
<!-- tooltip -->
<div class="abs" style="left:704px;top:141px;width:328px;height:120px;background:#505050;border-radius:9px"></div>
<div class="t" style="left:718px;top:146px;font-weight:bold;font-size:11.9px;color:#fff;line-height:13px;white-space:normal;width:310px">Route Manual (R)</div>
<div class="t" style="left:718px;top:167px;font-weight:bold;font-size:11.9px;color:#fff;line-height:13px;white-space:normal;width:310px">Converts unrouted connections into routed wires<br>(tracks).<br><br>This command activates the manual router, which<br>converts airwires (unrouted connections) into real<br>wires.</div>
<!-- bottom toolbar -->
<div class="abs" style="left:801px;top:1006px;width:317px;height:24px;background:#f2f2f2"></div>
<svg class="abs" style="left:801px;top:1006px" width="317" height="24" viewBox="801 1006 317 24" fill="none">
<circle cx="812" cy="1018" r="6.500" fill="#5b9ee6" stroke="#8a8a8a" stroke-width="0.800"/><path d="M811 1015.500h1.800v5.500M810.500 1021.300h3.400" stroke="#fff" stroke-width="1.300"/><circle cx="812" cy="1013.800" r="1" fill="#fff"/>
<ellipse cx="838" cy="1017.500" rx="8" ry="5.500" fill="#444"/><ellipse cx="838" cy="1017.500" rx="3.300" ry="3" stroke="#f2f2f2" stroke-width="1.100"/>
<path d="M859 1017l5-4.500v3c5 0 7 2.500 7 6.500h-1.800c0-2.800-2-4-5.200-4v3.500z" fill="#555" stroke="#555" stroke-width="0.800" stroke-linejoin="round"/>
<path d="M896 1017l-5-4.500v3c-5 0-7 2.500-7 6.500h1.500c0-2.800 2.200-4 5.500-4v3.500z" fill="#9a9a9a"/>
<g stroke="#8c8c8c" stroke-width="1"><circle cx="914.500" cy="1016" r="5"/><circle cx="940.500" cy="1016" r="5"/><circle cx="966.500" cy="1016" r="5"/></g>
<g stroke="#444" stroke-width="1.800"><path d="M918.500 1020l5 5M944.500 1020l5 5M970.500 1020l5 5"/></g>
<path d="M912 1016h5M914.500 1013.500v5M938 1016h5" stroke="#5aa0e0" stroke-width="1"/><rect x="963.200" y="1013.800" width="6.600" height="4.400" fill="#6ba8e6"/>
<path d="M990 1010v16M994.500 1010v16M999 1010v16M986.500 1013.500h16M986.500 1018h16M986.500 1022.500h16" stroke="#555" stroke-width="1"/>
<path d="M1020.500 1010.500v15M1013 1018h15" stroke="#555" stroke-width="1.200"/>
<circle cx="1046.500" cy="1018" r="8" fill="#ef2e4f"/><rect x="1041.500" y="1016.700" width="10" height="2.600" fill="#fff"/>
<rect x="1061" y="1006" width="26" height="24" fill="#0696d7"/><rect x="1064.500" y="1010.500" width="13.500" height="10" stroke="#9bd86a" stroke-width="1" stroke-dasharray="2.500 1.800"/><path d="M1074.500 1016v9l2.200-2 1.500 3.300 1.500-0.700-1.500-3.200h3z" fill="#fff"/>
<path d="M1094 1010.500v15" stroke="#555" stroke-width="1.200"/><path d="M1094 1014.500h8a3 3 0 0 1 0 7h-8" stroke="#555" stroke-width="1.200"/><path d="M1090 1017.800h14" stroke="#6ab0f0" stroke-width="1.800"/><path d="M1107.500 1016h6l-3 4z" fill="#222"/>
</svg>
<div id="leftedge" class="abs"></div></body></html>
